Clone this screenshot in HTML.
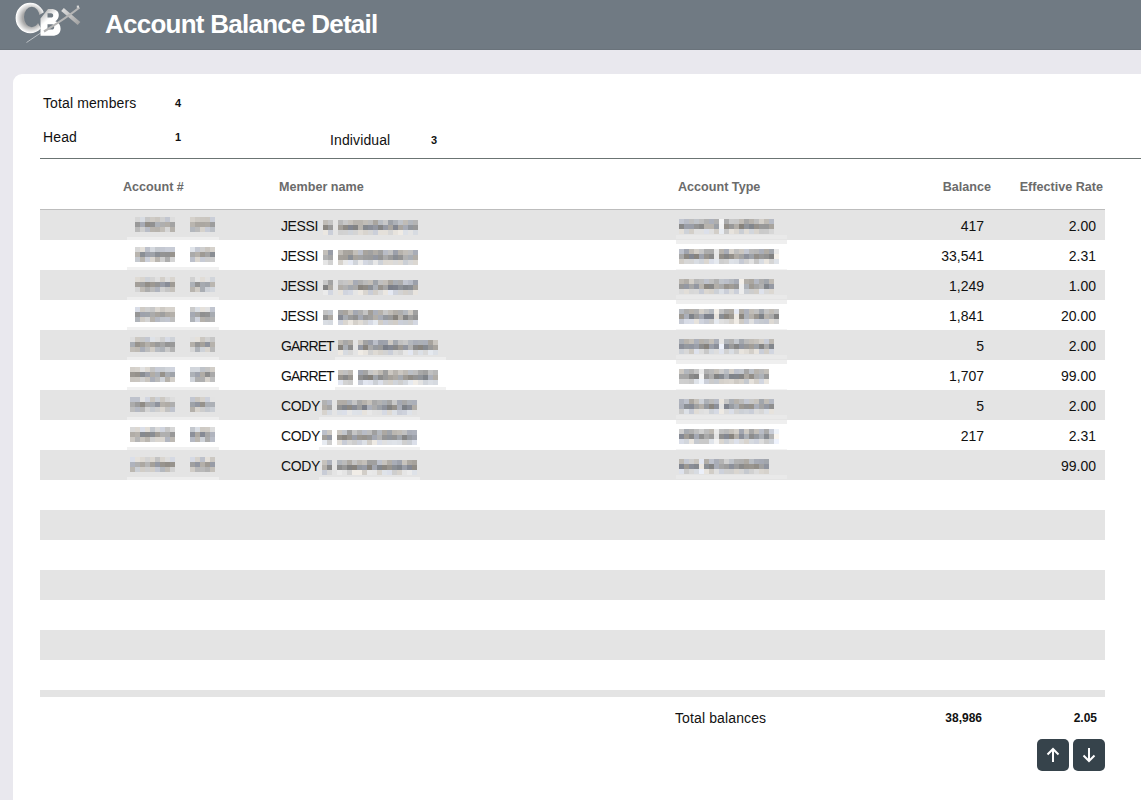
<!DOCTYPE html>
<html><head><meta charset="utf-8">
<style>
html,body{margin:0;padding:0}
body{width:1141px;height:800px;overflow:hidden;position:relative;background:#e9e8ee;font-family:"Liberation Sans",sans-serif;color:#111}
.hdr{position:absolute;left:0;top:0;width:1141px;height:49px;background:#707a83;border-bottom:1px solid #6a737b}
.title{position:absolute;left:105px;top:7px;font-size:26px;line-height:34px;font-weight:bold;color:#fff;letter-spacing:-0.75px;white-space:nowrap}
.card{position:absolute;left:13px;top:74px;width:1200px;height:900px;background:#fff;border-radius:9px}
.t{position:absolute;white-space:nowrap}
.lbl{font-size:14px;line-height:16px;letter-spacing:0.12px}
.val{font-size:11px;line-height:14px;font-weight:bold}
.hline{position:absolute;left:40px;top:158px;width:1101px;height:1px;background:#6b7473}
.th{position:absolute;top:179px;font-size:12.6px;line-height:16px;font-weight:bold;color:#6b6b6b;white-space:nowrap}
.row{position:absolute;left:40px;width:1065px;height:30px}
.row.g{background:#e4e4e4}
.row.w{background:#fff}
.topb{position:absolute;left:40px;top:209px;width:1065px;height:1px;background:#bdbdbd}
.cell{font-size:14px;line-height:30px;height:30px;margin-top:1px}
.nm{letter-spacing:-0.4px}
.r{text-align:right}
.btn{position:absolute;top:739px;width:32px;height:32px;border-radius:5px;background:#36434b}
</style></head><body>
<div class="hdr">
<svg width="100" height="50" style="position:absolute;left:0;top:0" viewBox="0 0 100 50">
<defs>
<radialGradient id="gc" cx="31" cy="18" r="15" gradientUnits="userSpaceOnUse"><stop offset="0.55" stop-color="#a5a5a5"/><stop offset="0.8" stop-color="#d8d8d8"/><stop offset="1" stop-color="#ffffff"/></radialGradient>
<linearGradient id="gb" x1="41" y1="12" x2="48" y2="20" gradientUnits="userSpaceOnUse"><stop offset="0" stop-color="#b0b0b0"/><stop offset="1" stop-color="#ffffff"/></linearGradient>
<linearGradient id="gx" x1="62" y1="8" x2="80" y2="24" gradientUnits="userSpaceOnUse"><stop offset="0" stop-color="#e0e0e0"/><stop offset="1" stop-color="#a0a0a0"/></linearGradient>
<clipPath id="cc"><path d="M0 0 H47 V10.5 L35 17.5 L50 45 H0 Z"/></clipPath>
</defs>
<path clip-path="url(#cc)" fill-rule="evenodd" fill="url(#gc)" d="M15.6 18 A14.6 15.2 0 1 0 44.8 18 A14.6 15.2 0 1 0 15.6 18 Z M24 17 A7.8 10.2 0 1 0 39.6 17 A7.8 10.2 0 1 0 24 17 Z"/>
<path d="M26.5 42.5 L45 30" stroke="#cdd1d4" stroke-width="0.8" fill="none"/>
<path fill-rule="evenodd" fill="url(#gb)" d="M48 9 H51 C56 9 58.8 11.5 58.8 15 C58.8 18 57.3 20 55.3 21.2 C58.8 22.3 60.6 25 60.6 28.7 C60.6 33 57.3 35.8 52.3 35.8 H40.5 L40.5 18.5 Z M47.5 13.3 H51 C52.6 13.3 53.2 14.4 53.2 15.4 C53.2 16.7 52.4 17.6 51 17.6 H47.5 Z M47.5 24.3 H52 C53.6 24.3 54.2 25.6 54.2 26.9 C54.2 28.5 53.4 29.6 52 29.6 H47.5 Z"/>
<path d="M62.5 9.5 L79 23.5" stroke="url(#gx)" stroke-width="4" fill="none"/>
<path d="M44 31.5 C58 23 70 15 79.5 7.5" stroke="#b5b5b5" stroke-width="2.2" fill="none"/>
<rect x="76.8" y="5.6" width="2.2" height="2.2" fill="#d8d8d8"/>
</svg>
<div class="title">Account Balance Detail</div>
</div>
<div class="card"></div>
<div class="t lbl" style="left:43px;top:95px">Total members</div>
<div class="t val" style="left:175px;top:96px">4</div>
<div class="t lbl" style="left:43px;top:129px">Head</div>
<div class="t val" style="left:175px;top:130px">1</div>
<div class="t lbl" style="left:330px;top:132px">Individual</div>
<div class="t val" style="left:431px;top:133px">3</div>
<div class="hline"></div>
<div class="th" style="left:123px">Account #</div>
<div class="th" style="left:279px">Member name</div>
<div class="th" style="left:678px">Account Type</div>
<div class="th" style="right:150px">Balance</div>
<div class="th" style="right:38px">Effective Rate</div>
<div class="row g" style="top:210px"></div><div class="row w" style="top:240px"></div><div class="row g" style="top:270px"></div><div class="row w" style="top:300px"></div><div class="row g" style="top:330px"></div><div class="row w" style="top:360px"></div><div class="row g" style="top:390px"></div><div class="row w" style="top:420px"></div><div class="row g" style="top:450px"></div><div class="row g" style="top:510px;height:30px"></div><div class="row g" style="top:570px;height:30px"></div><div class="row g" style="top:630px;height:30px"></div><div class="row g" style="top:690px;height:7px"></div>
<div class="topb"></div>
<svg width="1141" height="800" style="position:absolute;left:0;top:0" shape-rendering="crispEdges"><rect x="127" y="237" width="92" height="3" fill="#eeeeee"/><rect x="676" y="235" width="111" height="4" fill="#e9e9e9"/><rect x="676" y="240" width="111" height="4" fill="#efefef"/><rect x="135" y="217" width="5" height="5" fill="#d7d7d7"/><rect x="140" y="217" width="5" height="5" fill="#d8dce2"/><rect x="145" y="217" width="5" height="5" fill="#c6c6c6"/><rect x="150" y="217" width="5" height="5" fill="#cfcbc5"/><rect x="155" y="217" width="5" height="5" fill="#cac6c0"/><rect x="160" y="217" width="5" height="5" fill="#d0d0d0"/><rect x="165" y="217" width="5" height="5" fill="#c2c6d0"/><rect x="170" y="217" width="5" height="5" fill="#dddddd"/><rect x="135" y="222" width="5" height="5" fill="#999999"/><rect x="140" y="222" width="5" height="5" fill="#a7abb5"/><rect x="145" y="222" width="5" height="5" fill="#918d87"/><rect x="150" y="222" width="5" height="5" fill="#919191"/><rect x="155" y="222" width="5" height="5" fill="#aeb2b8"/><rect x="160" y="222" width="5" height="5" fill="#afafaf"/><rect x="165" y="222" width="5" height="5" fill="#b2aea8"/><rect x="170" y="222" width="5" height="5" fill="#a3a3a3"/><rect x="135" y="227" width="5" height="5" fill="#bababa"/><rect x="140" y="227" width="5" height="5" fill="#cfcfcf"/><rect x="145" y="227" width="5" height="5" fill="#b8bcc6"/><rect x="150" y="227" width="5" height="5" fill="#b9b5af"/><rect x="155" y="227" width="5" height="5" fill="#b7b3ad"/><rect x="160" y="227" width="5" height="5" fill="#c3bfb9"/><rect x="165" y="227" width="5" height="5" fill="#d7d7d7"/><rect x="170" y="227" width="5" height="5" fill="#b6b2ac"/><rect x="190" y="217" width="5" height="5" fill="#d5d1cb"/><rect x="195" y="217" width="5" height="5" fill="#cdc9c3"/><rect x="200" y="217" width="5" height="5" fill="#cbc7c1"/><rect x="205" y="217" width="5" height="5" fill="#cac6c0"/><rect x="210" y="217" width="5" height="5" fill="#caced8"/><rect x="190" y="222" width="5" height="5" fill="#b9b5af"/><rect x="195" y="222" width="5" height="5" fill="#aba7a1"/><rect x="200" y="222" width="5" height="5" fill="#aba7a1"/><rect x="205" y="222" width="5" height="5" fill="#ada9a3"/><rect x="210" y="222" width="5" height="5" fill="#9d9d9d"/><rect x="190" y="227" width="5" height="5" fill="#b3b7bd"/><rect x="195" y="227" width="5" height="5" fill="#bbbbbb"/><rect x="200" y="227" width="5" height="5" fill="#d6d2cc"/><rect x="205" y="227" width="5" height="5" fill="#c7cbd5"/><rect x="210" y="227" width="5" height="5" fill="#bdc1c7"/><rect x="323" y="220" width="5" height="5" fill="#c0bcb6"/><rect x="328" y="220" width="5" height="5" fill="#c4c4c4"/><rect x="323" y="225" width="5" height="5" fill="#8b8781"/><rect x="328" y="225" width="5" height="5" fill="#9a9a9a"/><rect x="323" y="230" width="5" height="5" fill="#ebe7e1"/><rect x="328" y="230" width="5" height="5" fill="#cbcfd9"/><rect x="338" y="220" width="5" height="5" fill="#b8b8b8"/><rect x="343" y="220" width="5" height="5" fill="#c8c8c8"/><rect x="348" y="220" width="5" height="5" fill="#c5c1bb"/><rect x="353" y="220" width="5" height="5" fill="#b8b4ae"/><rect x="358" y="220" width="5" height="5" fill="#b8b4ae"/><rect x="363" y="220" width="5" height="5" fill="#c1bdb7"/><rect x="368" y="220" width="5" height="5" fill="#bbbbbb"/><rect x="373" y="220" width="5" height="5" fill="#a9a59f"/><rect x="378" y="220" width="5" height="5" fill="#b8bcc2"/><rect x="383" y="220" width="5" height="5" fill="#c8c8c8"/><rect x="388" y="220" width="5" height="5" fill="#9da1a7"/><rect x="393" y="220" width="5" height="5" fill="#adb1b7"/><rect x="398" y="220" width="5" height="5" fill="#bec2c8"/><rect x="403" y="220" width="5" height="5" fill="#c0bcb6"/><rect x="408" y="220" width="5" height="5" fill="#b2b6bc"/><rect x="413" y="220" width="5" height="5" fill="#b4b4b4"/><rect x="338" y="225" width="5" height="5" fill="#a39f99"/><rect x="343" y="225" width="5" height="5" fill="#8e8a84"/><rect x="348" y="225" width="5" height="5" fill="#81858f"/><rect x="353" y="225" width="5" height="5" fill="#838383"/><rect x="358" y="225" width="5" height="5" fill="#b7b3ad"/><rect x="363" y="225" width="5" height="5" fill="#84888e"/><rect x="368" y="225" width="5" height="5" fill="#898d97"/><rect x="373" y="225" width="5" height="5" fill="#9397a1"/><rect x="378" y="225" width="5" height="5" fill="#858585"/><rect x="383" y="225" width="5" height="5" fill="#969aa4"/><rect x="388" y="225" width="5" height="5" fill="#a9a59f"/><rect x="393" y="225" width="5" height="5" fill="#828690"/><rect x="398" y="225" width="5" height="5" fill="#a9a59f"/><rect x="403" y="225" width="5" height="5" fill="#a7abb5"/><rect x="408" y="225" width="5" height="5" fill="#92969c"/><rect x="413" y="225" width="5" height="5" fill="#989898"/><rect x="338" y="230" width="5" height="5" fill="#d1d1d1"/><rect x="343" y="230" width="5" height="5" fill="#d2d2d2"/><rect x="348" y="230" width="5" height="5" fill="#d0d4da"/><rect x="353" y="230" width="5" height="5" fill="#d4d4d4"/><rect x="358" y="230" width="5" height="5" fill="#e0dcd6"/><rect x="363" y="230" width="5" height="5" fill="#d8d4ce"/><rect x="368" y="230" width="5" height="5" fill="#d6d6d6"/><rect x="373" y="230" width="5" height="5" fill="#cbcfd9"/><rect x="378" y="230" width="5" height="5" fill="#e4e0da"/><rect x="383" y="230" width="5" height="5" fill="#e4e0da"/><rect x="388" y="230" width="5" height="5" fill="#d7d7d7"/><rect x="393" y="230" width="5" height="5" fill="#e7e3dd"/><rect x="398" y="230" width="5" height="5" fill="#efebe5"/><rect x="403" y="230" width="5" height="5" fill="#dde1e7"/><rect x="408" y="230" width="5" height="5" fill="#e4e4e4"/><rect x="413" y="230" width="5" height="5" fill="#d7dbe1"/><rect x="679" y="219" width="5" height="5" fill="#c2c6d0"/><rect x="684" y="219" width="5" height="5" fill="#b8bcc6"/><rect x="689" y="219" width="5" height="5" fill="#bebebe"/><rect x="694" y="219" width="5" height="5" fill="#bfc3c9"/><rect x="699" y="219" width="5" height="5" fill="#bebebe"/><rect x="704" y="219" width="5" height="5" fill="#b1b1b1"/><rect x="709" y="219" width="5" height="5" fill="#acb0ba"/><rect x="714" y="219" width="5" height="5" fill="#afafaf"/><rect x="719" y="219" width="5" height="5" fill="#f4f4f4"/><rect x="724" y="219" width="5" height="5" fill="#ababab"/><rect x="729" y="219" width="5" height="5" fill="#c9c9c9"/><rect x="734" y="219" width="5" height="5" fill="#c7c7c7"/><rect x="739" y="219" width="5" height="5" fill="#c0bcb6"/><rect x="744" y="219" width="5" height="5" fill="#a6a6a6"/><rect x="749" y="219" width="5" height="5" fill="#b6b2ac"/><rect x="754" y="219" width="5" height="5" fill="#bdbdbd"/><rect x="759" y="219" width="5" height="5" fill="#d3cfc9"/><rect x="764" y="219" width="5" height="5" fill="#bfbbb5"/><rect x="769" y="219" width="5" height="5" fill="#b6bac4"/><rect x="679" y="224" width="5" height="5" fill="#898989"/><rect x="684" y="224" width="5" height="5" fill="#9b9fa9"/><rect x="689" y="224" width="5" height="5" fill="#9a9ea8"/><rect x="694" y="224" width="5" height="5" fill="#959595"/><rect x="699" y="224" width="5" height="5" fill="#8b8b8b"/><rect x="704" y="224" width="5" height="5" fill="#b7b3ad"/><rect x="709" y="224" width="5" height="5" fill="#b7b3ad"/><rect x="714" y="224" width="5" height="5" fill="#9ca0a6"/><rect x="719" y="224" width="5" height="5" fill="#f1f1f1"/><rect x="724" y="224" width="5" height="5" fill="#938f89"/><rect x="729" y="224" width="5" height="5" fill="#999999"/><rect x="734" y="224" width="5" height="5" fill="#b2aea8"/><rect x="739" y="224" width="5" height="5" fill="#87837d"/><rect x="744" y="224" width="5" height="5" fill="#91959b"/><rect x="749" y="224" width="5" height="5" fill="#83878d"/><rect x="754" y="224" width="5" height="5" fill="#96928c"/><rect x="759" y="224" width="5" height="5" fill="#999999"/><rect x="764" y="224" width="5" height="5" fill="#989898"/><rect x="769" y="224" width="5" height="5" fill="#a8a49e"/><rect x="679" y="229" width="5" height="5" fill="#e4e0da"/><rect x="684" y="229" width="5" height="5" fill="#ced2d8"/><rect x="689" y="229" width="5" height="5" fill="#d3cfc9"/><rect x="694" y="229" width="5" height="5" fill="#e1e1e1"/><rect x="699" y="229" width="5" height="5" fill="#e1e1e1"/><rect x="704" y="229" width="5" height="5" fill="#dce0ea"/><rect x="709" y="229" width="5" height="5" fill="#dfdfdf"/><rect x="714" y="229" width="5" height="5" fill="#d2cec8"/><rect x="719" y="229" width="5" height="5" fill="#e8ecf2"/><rect x="724" y="229" width="5" height="5" fill="#c8c8c8"/><rect x="729" y="229" width="5" height="5" fill="#e7e3dd"/><rect x="734" y="229" width="5" height="5" fill="#ddd9d3"/><rect x="739" y="229" width="5" height="5" fill="#caced4"/><rect x="744" y="229" width="5" height="5" fill="#e1ddd7"/><rect x="749" y="229" width="5" height="5" fill="#d2d6dc"/><rect x="754" y="229" width="5" height="5" fill="#d9d5cf"/><rect x="759" y="229" width="5" height="5" fill="#cacaca"/><rect x="764" y="229" width="5" height="5" fill="#cbcbcb"/><rect x="769" y="229" width="5" height="5" fill="#d7d7d7"/><rect x="127" y="267" width="92" height="3" fill="#f1f1f1"/><rect x="676" y="269" width="111" height="1" fill="#f4f4f4"/><rect x="135" y="247" width="5" height="5" fill="#d8d8d8"/><rect x="140" y="247" width="5" height="5" fill="#e5e1db"/><rect x="145" y="247" width="5" height="5" fill="#bdc1cb"/><rect x="150" y="247" width="5" height="5" fill="#d5d9df"/><rect x="155" y="247" width="5" height="5" fill="#c4c8ce"/><rect x="160" y="247" width="5" height="5" fill="#c4c8d2"/><rect x="165" y="247" width="5" height="5" fill="#c9cdd7"/><rect x="170" y="247" width="5" height="5" fill="#c8ccd6"/><rect x="135" y="252" width="5" height="5" fill="#b8b4ae"/><rect x="140" y="252" width="5" height="5" fill="#8b8f95"/><rect x="145" y="252" width="5" height="5" fill="#9da1ab"/><rect x="150" y="252" width="5" height="5" fill="#9fa3a9"/><rect x="155" y="252" width="5" height="5" fill="#8b8f95"/><rect x="160" y="252" width="5" height="5" fill="#949494"/><rect x="165" y="252" width="5" height="5" fill="#929292"/><rect x="170" y="252" width="5" height="5" fill="#97938d"/><rect x="135" y="257" width="5" height="5" fill="#c5c9cf"/><rect x="140" y="257" width="5" height="5" fill="#b9b5af"/><rect x="145" y="257" width="5" height="5" fill="#ccd0da"/><rect x="150" y="257" width="5" height="5" fill="#dcd8d2"/><rect x="155" y="257" width="5" height="5" fill="#b9b5af"/><rect x="160" y="257" width="5" height="5" fill="#cfcfcf"/><rect x="165" y="257" width="5" height="5" fill="#adadad"/><rect x="170" y="257" width="5" height="5" fill="#d5d5d5"/><rect x="190" y="247" width="5" height="5" fill="#e0e4ea"/><rect x="195" y="247" width="5" height="5" fill="#c5c9d3"/><rect x="200" y="247" width="5" height="5" fill="#cfcfcf"/><rect x="205" y="247" width="5" height="5" fill="#cac6c0"/><rect x="210" y="247" width="5" height="5" fill="#d6d2cc"/><rect x="190" y="252" width="5" height="5" fill="#aaaaaa"/><rect x="195" y="252" width="5" height="5" fill="#b5b1ab"/><rect x="200" y="252" width="5" height="5" fill="#9e9a94"/><rect x="205" y="252" width="5" height="5" fill="#a4a4a4"/><rect x="210" y="252" width="5" height="5" fill="#898d93"/><rect x="190" y="257" width="5" height="5" fill="#bcc0ca"/><rect x="195" y="257" width="5" height="5" fill="#dad6d0"/><rect x="200" y="257" width="5" height="5" fill="#c7cbd5"/><rect x="205" y="257" width="5" height="5" fill="#cccccc"/><rect x="210" y="257" width="5" height="5" fill="#cecece"/><rect x="323" y="250" width="5" height="5" fill="#c3bfb9"/><rect x="328" y="250" width="5" height="5" fill="#999da7"/><rect x="323" y="255" width="5" height="5" fill="#b1b1b1"/><rect x="328" y="255" width="5" height="5" fill="#a6a6a6"/><rect x="323" y="260" width="5" height="5" fill="#e5e5e5"/><rect x="328" y="260" width="5" height="5" fill="#d2d2d2"/><rect x="338" y="250" width="5" height="5" fill="#c0bcb6"/><rect x="343" y="250" width="5" height="5" fill="#a9a59f"/><rect x="348" y="250" width="5" height="5" fill="#a7a39d"/><rect x="353" y="250" width="5" height="5" fill="#c3bfb9"/><rect x="358" y="250" width="5" height="5" fill="#bbbfc9"/><rect x="363" y="250" width="5" height="5" fill="#a8a49e"/><rect x="368" y="250" width="5" height="5" fill="#a1a1a1"/><rect x="373" y="250" width="5" height="5" fill="#b0aca6"/><rect x="378" y="250" width="5" height="5" fill="#a0a0a0"/><rect x="383" y="250" width="5" height="5" fill="#b8bcc6"/><rect x="388" y="250" width="5" height="5" fill="#c1c1c1"/><rect x="393" y="250" width="5" height="5" fill="#9ca0aa"/><rect x="398" y="250" width="5" height="5" fill="#b6b2ac"/><rect x="403" y="250" width="5" height="5" fill="#c2beb8"/><rect x="408" y="250" width="5" height="5" fill="#bebebe"/><rect x="413" y="250" width="5" height="5" fill="#a9adb7"/><rect x="338" y="255" width="5" height="5" fill="#a4a09a"/><rect x="343" y="255" width="5" height="5" fill="#a29e98"/><rect x="348" y="255" width="5" height="5" fill="#8b8f95"/><rect x="353" y="255" width="5" height="5" fill="#a7a39d"/><rect x="358" y="255" width="5" height="5" fill="#a3a3a3"/><rect x="363" y="255" width="5" height="5" fill="#9c9c9c"/><rect x="368" y="255" width="5" height="5" fill="#9a9a9a"/><rect x="373" y="255" width="5" height="5" fill="#9397a1"/><rect x="378" y="255" width="5" height="5" fill="#949494"/><rect x="383" y="255" width="5" height="5" fill="#aaaaaa"/><rect x="388" y="255" width="5" height="5" fill="#9b9b9b"/><rect x="393" y="255" width="5" height="5" fill="#898d93"/><rect x="398" y="255" width="5" height="5" fill="#939393"/><rect x="403" y="255" width="5" height="5" fill="#b1b1b1"/><rect x="408" y="255" width="5" height="5" fill="#a9adb3"/><rect x="413" y="255" width="5" height="5" fill="#b0aca6"/><rect x="338" y="260" width="5" height="5" fill="#d7d3cd"/><rect x="343" y="260" width="5" height="5" fill="#e9e9e9"/><rect x="348" y="260" width="5" height="5" fill="#e5e9f3"/><rect x="353" y="260" width="5" height="5" fill="#d0d4da"/><rect x="358" y="260" width="5" height="5" fill="#ebebeb"/><rect x="363" y="260" width="5" height="5" fill="#d3d7e1"/><rect x="368" y="260" width="5" height="5" fill="#ced2d8"/><rect x="373" y="260" width="5" height="5" fill="#e7e7e7"/><rect x="378" y="260" width="5" height="5" fill="#ced2d8"/><rect x="383" y="260" width="5" height="5" fill="#dedad4"/><rect x="388" y="260" width="5" height="5" fill="#dfdbd5"/><rect x="393" y="260" width="5" height="5" fill="#dadada"/><rect x="398" y="260" width="5" height="5" fill="#dedad4"/><rect x="403" y="260" width="5" height="5" fill="#cbcfd5"/><rect x="408" y="260" width="5" height="5" fill="#d8d8d8"/><rect x="413" y="260" width="5" height="5" fill="#dbd7d1"/><rect x="679" y="249" width="5" height="5" fill="#bcc0ca"/><rect x="684" y="249" width="5" height="5" fill="#a0a4ae"/><rect x="689" y="249" width="5" height="5" fill="#bebab4"/><rect x="694" y="249" width="5" height="5" fill="#d2cec8"/><rect x="699" y="249" width="5" height="5" fill="#c5c5c5"/><rect x="704" y="249" width="5" height="5" fill="#acacac"/><rect x="709" y="249" width="5" height="5" fill="#ababab"/><rect x="714" y="249" width="5" height="5" fill="#e9e9e9"/><rect x="719" y="249" width="5" height="5" fill="#b6b2ac"/><rect x="724" y="249" width="5" height="5" fill="#a7abb5"/><rect x="729" y="249" width="5" height="5" fill="#d6d2cc"/><rect x="734" y="249" width="5" height="5" fill="#bebebe"/><rect x="739" y="249" width="5" height="5" fill="#cbc7c1"/><rect x="744" y="249" width="5" height="5" fill="#c3c7d1"/><rect x="749" y="249" width="5" height="5" fill="#b9b9b9"/><rect x="754" y="249" width="5" height="5" fill="#b6b6b6"/><rect x="759" y="249" width="5" height="5" fill="#aaaeb8"/><rect x="764" y="249" width="5" height="5" fill="#afaba5"/><rect x="769" y="249" width="5" height="5" fill="#a2a6ac"/><rect x="774" y="249" width="5" height="5" fill="#e9e9e9"/><rect x="679" y="254" width="5" height="5" fill="#a8a8a8"/><rect x="684" y="254" width="5" height="5" fill="#8c8882"/><rect x="689" y="254" width="5" height="5" fill="#838791"/><rect x="694" y="254" width="5" height="5" fill="#88847e"/><rect x="699" y="254" width="5" height="5" fill="#9fa3ad"/><rect x="704" y="254" width="5" height="5" fill="#97938d"/><rect x="709" y="254" width="5" height="5" fill="#8a8a8a"/><rect x="714" y="254" width="5" height="5" fill="#e8e8e8"/><rect x="719" y="254" width="5" height="5" fill="#928e88"/><rect x="724" y="254" width="5" height="5" fill="#858585"/><rect x="729" y="254" width="5" height="5" fill="#94908a"/><rect x="734" y="254" width="5" height="5" fill="#b0aca6"/><rect x="739" y="254" width="5" height="5" fill="#a3a3a3"/><rect x="744" y="254" width="5" height="5" fill="#8e929c"/><rect x="749" y="254" width="5" height="5" fill="#9ea2a8"/><rect x="754" y="254" width="5" height="5" fill="#938f89"/><rect x="759" y="254" width="5" height="5" fill="#989898"/><rect x="764" y="254" width="5" height="5" fill="#929292"/><rect x="769" y="254" width="5" height="5" fill="#828282"/><rect x="774" y="254" width="5" height="5" fill="#f5f1eb"/><rect x="679" y="259" width="5" height="5" fill="#d2cec8"/><rect x="684" y="259" width="5" height="5" fill="#d7d7d7"/><rect x="689" y="259" width="5" height="5" fill="#d6d6d6"/><rect x="694" y="259" width="5" height="5" fill="#d9dde3"/><rect x="699" y="259" width="5" height="5" fill="#d1d5db"/><rect x="704" y="259" width="5" height="5" fill="#dbd7d1"/><rect x="709" y="259" width="5" height="5" fill="#dce0ea"/><rect x="714" y="259" width="5" height="5" fill="#e6eaf0"/><rect x="719" y="259" width="5" height="5" fill="#cecece"/><rect x="724" y="259" width="5" height="5" fill="#d2d2d2"/><rect x="729" y="259" width="5" height="5" fill="#dee2e8"/><rect x="734" y="259" width="5" height="5" fill="#dbdfe5"/><rect x="739" y="259" width="5" height="5" fill="#c6cad4"/><rect x="744" y="259" width="5" height="5" fill="#d3d3d3"/><rect x="749" y="259" width="5" height="5" fill="#e2e2e2"/><rect x="754" y="259" width="5" height="5" fill="#c8c8c8"/><rect x="759" y="259" width="5" height="5" fill="#d8dce2"/><rect x="764" y="259" width="5" height="5" fill="#eae6e0"/><rect x="769" y="259" width="5" height="5" fill="#d5d5d5"/><rect x="774" y="259" width="5" height="5" fill="#dfe3e9"/><rect x="127" y="297" width="92" height="3" fill="#eeeeee"/><rect x="676" y="295" width="111" height="4" fill="#e9e9e9"/><rect x="676" y="300" width="111" height="4" fill="#efefef"/><rect x="135" y="277" width="5" height="5" fill="#dfdbd5"/><rect x="140" y="277" width="5" height="5" fill="#d9d5cf"/><rect x="145" y="277" width="5" height="5" fill="#ced2d8"/><rect x="150" y="277" width="5" height="5" fill="#d5d5d5"/><rect x="155" y="277" width="5" height="5" fill="#e0e0e0"/><rect x="160" y="277" width="5" height="5" fill="#d3cfc9"/><rect x="165" y="277" width="5" height="5" fill="#dfdfdf"/><rect x="170" y="277" width="5" height="5" fill="#d9d5cf"/><rect x="135" y="282" width="5" height="5" fill="#a39f99"/><rect x="140" y="282" width="5" height="5" fill="#9e9e9e"/><rect x="145" y="282" width="5" height="5" fill="#928e88"/><rect x="150" y="282" width="5" height="5" fill="#9d9993"/><rect x="155" y="282" width="5" height="5" fill="#959595"/><rect x="160" y="282" width="5" height="5" fill="#999da7"/><rect x="165" y="282" width="5" height="5" fill="#898d97"/><rect x="170" y="282" width="5" height="5" fill="#9f9b95"/><rect x="135" y="287" width="5" height="5" fill="#d5d5d5"/><rect x="140" y="287" width="5" height="5" fill="#bfbbb5"/><rect x="145" y="287" width="5" height="5" fill="#acacac"/><rect x="150" y="287" width="5" height="5" fill="#bcbcbc"/><rect x="155" y="287" width="5" height="5" fill="#afb3bd"/><rect x="160" y="287" width="5" height="5" fill="#d1d1d1"/><rect x="165" y="287" width="5" height="5" fill="#c5c5c5"/><rect x="170" y="287" width="5" height="5" fill="#c5c1bb"/><rect x="190" y="277" width="5" height="5" fill="#d1d1d1"/><rect x="195" y="277" width="5" height="5" fill="#e4e4e4"/><rect x="200" y="277" width="5" height="5" fill="#e1ddd7"/><rect x="205" y="277" width="5" height="5" fill="#e2e2e2"/><rect x="210" y="277" width="5" height="5" fill="#d1d5db"/><rect x="190" y="282" width="5" height="5" fill="#adb1b7"/><rect x="195" y="282" width="5" height="5" fill="#939393"/><rect x="200" y="282" width="5" height="5" fill="#a6aab0"/><rect x="205" y="282" width="5" height="5" fill="#a1a5ab"/><rect x="210" y="282" width="5" height="5" fill="#bab6b0"/><rect x="190" y="287" width="5" height="5" fill="#b8b4ae"/><rect x="195" y="287" width="5" height="5" fill="#d0ccc6"/><rect x="200" y="287" width="5" height="5" fill="#a9adb3"/><rect x="205" y="287" width="5" height="5" fill="#cdd1d7"/><rect x="210" y="287" width="5" height="5" fill="#d3d7dd"/><rect x="323" y="280" width="5" height="5" fill="#c7c7c7"/><rect x="328" y="280" width="5" height="5" fill="#a3a3a3"/><rect x="323" y="285" width="5" height="5" fill="#828282"/><rect x="328" y="285" width="5" height="5" fill="#aeaaa4"/><rect x="323" y="290" width="5" height="5" fill="#ebebeb"/><rect x="328" y="290" width="5" height="5" fill="#d3d7e1"/><rect x="338" y="280" width="5" height="5" fill="#c1c1c1"/><rect x="343" y="280" width="5" height="5" fill="#c6c6c6"/><rect x="348" y="280" width="5" height="5" fill="#cac6c0"/><rect x="353" y="280" width="5" height="5" fill="#a7abb5"/><rect x="358" y="280" width="5" height="5" fill="#aeaeae"/><rect x="363" y="280" width="5" height="5" fill="#bbbbbb"/><rect x="368" y="280" width="5" height="5" fill="#c2beb8"/><rect x="373" y="280" width="5" height="5" fill="#9fa3a9"/><rect x="378" y="280" width="5" height="5" fill="#bfbfbf"/><rect x="383" y="280" width="5" height="5" fill="#c2beb8"/><rect x="388" y="280" width="5" height="5" fill="#a8a49e"/><rect x="393" y="280" width="5" height="5" fill="#a9adb3"/><rect x="398" y="280" width="5" height="5" fill="#ababab"/><rect x="403" y="280" width="5" height="5" fill="#c1c5cf"/><rect x="408" y="280" width="5" height="5" fill="#b7bbc5"/><rect x="413" y="280" width="5" height="5" fill="#9ca0aa"/><rect x="338" y="285" width="5" height="5" fill="#b1ada7"/><rect x="343" y="285" width="5" height="5" fill="#b1b1b1"/><rect x="348" y="285" width="5" height="5" fill="#a3a7ad"/><rect x="353" y="285" width="5" height="5" fill="#a9a9a9"/><rect x="358" y="285" width="5" height="5" fill="#88847e"/><rect x="363" y="285" width="5" height="5" fill="#8f8b85"/><rect x="368" y="285" width="5" height="5" fill="#8c9096"/><rect x="373" y="285" width="5" height="5" fill="#abafb5"/><rect x="378" y="285" width="5" height="5" fill="#97938d"/><rect x="383" y="285" width="5" height="5" fill="#a4a4a4"/><rect x="388" y="285" width="5" height="5" fill="#7a7e88"/><rect x="393" y="285" width="5" height="5" fill="#7d818b"/><rect x="398" y="285" width="5" height="5" fill="#8d9197"/><rect x="403" y="285" width="5" height="5" fill="#82868c"/><rect x="408" y="285" width="5" height="5" fill="#898d93"/><rect x="413" y="285" width="5" height="5" fill="#a5a19b"/><rect x="338" y="290" width="5" height="5" fill="#e7e3dd"/><rect x="343" y="290" width="5" height="5" fill="#d0d4de"/><rect x="348" y="290" width="5" height="5" fill="#d5d9e3"/><rect x="353" y="290" width="5" height="5" fill="#e5e5e5"/><rect x="358" y="290" width="5" height="5" fill="#ede9e3"/><rect x="363" y="290" width="5" height="5" fill="#d9d5cf"/><rect x="368" y="290" width="5" height="5" fill="#c9cdd7"/><rect x="373" y="290" width="5" height="5" fill="#d3cfc9"/><rect x="378" y="290" width="5" height="5" fill="#dbdbdb"/><rect x="383" y="290" width="5" height="5" fill="#ebe7e1"/><rect x="388" y="290" width="5" height="5" fill="#e5e9f3"/><rect x="393" y="290" width="5" height="5" fill="#cfd3dd"/><rect x="398" y="290" width="5" height="5" fill="#d3d3d3"/><rect x="403" y="290" width="5" height="5" fill="#d3cfc9"/><rect x="408" y="290" width="5" height="5" fill="#cfcfcf"/><rect x="413" y="290" width="5" height="5" fill="#e8e4de"/><rect x="679" y="279" width="5" height="5" fill="#bbb7b1"/><rect x="684" y="279" width="5" height="5" fill="#b1ada7"/><rect x="689" y="279" width="5" height="5" fill="#d1cdc7"/><rect x="694" y="279" width="5" height="5" fill="#b6b6b6"/><rect x="699" y="279" width="5" height="5" fill="#bcbcbc"/><rect x="704" y="279" width="5" height="5" fill="#bec2cc"/><rect x="709" y="279" width="5" height="5" fill="#bebebe"/><rect x="714" y="279" width="5" height="5" fill="#afafaf"/><rect x="719" y="279" width="5" height="5" fill="#c0c4ca"/><rect x="724" y="279" width="5" height="5" fill="#bbbfc9"/><rect x="729" y="279" width="5" height="5" fill="#b4b8be"/><rect x="734" y="279" width="5" height="5" fill="#a8acb6"/><rect x="739" y="279" width="5" height="5" fill="#f3efe9"/><rect x="744" y="279" width="5" height="5" fill="#b2aea8"/><rect x="749" y="279" width="5" height="5" fill="#aba7a1"/><rect x="754" y="279" width="5" height="5" fill="#b4b8c2"/><rect x="759" y="279" width="5" height="5" fill="#acacac"/><rect x="764" y="279" width="5" height="5" fill="#a1a5ab"/><rect x="769" y="279" width="5" height="5" fill="#bdb9b3"/><rect x="679" y="284" width="5" height="5" fill="#999999"/><rect x="684" y="284" width="5" height="5" fill="#9599a3"/><rect x="689" y="284" width="5" height="5" fill="#a7a7a7"/><rect x="694" y="284" width="5" height="5" fill="#9397a1"/><rect x="699" y="284" width="5" height="5" fill="#b8b4ae"/><rect x="704" y="284" width="5" height="5" fill="#8b8781"/><rect x="709" y="284" width="5" height="5" fill="#888888"/><rect x="714" y="284" width="5" height="5" fill="#b2aea8"/><rect x="719" y="284" width="5" height="5" fill="#aaaaaa"/><rect x="724" y="284" width="5" height="5" fill="#97938d"/><rect x="729" y="284" width="5" height="5" fill="#a19d97"/><rect x="734" y="284" width="5" height="5" fill="#969696"/><rect x="739" y="284" width="5" height="5" fill="#eeeeee"/><rect x="744" y="284" width="5" height="5" fill="#aeb2b8"/><rect x="749" y="284" width="5" height="5" fill="#9f9b95"/><rect x="754" y="284" width="5" height="5" fill="#a5a5a5"/><rect x="759" y="284" width="5" height="5" fill="#b0b0b0"/><rect x="764" y="284" width="5" height="5" fill="#81858b"/><rect x="769" y="284" width="5" height="5" fill="#969aa4"/><rect x="679" y="289" width="5" height="5" fill="#dbdbdb"/><rect x="684" y="289" width="5" height="5" fill="#e2ded8"/><rect x="689" y="289" width="5" height="5" fill="#d7d7d7"/><rect x="694" y="289" width="5" height="5" fill="#d9d9d9"/><rect x="699" y="289" width="5" height="5" fill="#c7cbd5"/><rect x="704" y="289" width="5" height="5" fill="#dbd7d1"/><rect x="709" y="289" width="5" height="5" fill="#d7d3cd"/><rect x="714" y="289" width="5" height="5" fill="#ccd0d6"/><rect x="719" y="289" width="5" height="5" fill="#dbdfe5"/><rect x="724" y="289" width="5" height="5" fill="#caced8"/><rect x="729" y="289" width="5" height="5" fill="#dcdcdc"/><rect x="734" y="289" width="5" height="5" fill="#cbcfd9"/><rect x="739" y="289" width="5" height="5" fill="#ededed"/><rect x="744" y="289" width="5" height="5" fill="#c9cdd3"/><rect x="749" y="289" width="5" height="5" fill="#cdcdcd"/><rect x="754" y="289" width="5" height="5" fill="#d2cec8"/><rect x="759" y="289" width="5" height="5" fill="#dee2ec"/><rect x="764" y="289" width="5" height="5" fill="#d9d9d9"/><rect x="769" y="289" width="5" height="5" fill="#dcd8d2"/><rect x="127" y="327" width="92" height="3" fill="#f1f1f1"/><rect x="676" y="329" width="111" height="1" fill="#f4f4f4"/><rect x="135" y="307" width="5" height="5" fill="#d9dde7"/><rect x="140" y="307" width="5" height="5" fill="#cfcbc5"/><rect x="145" y="307" width="5" height="5" fill="#cfcfcf"/><rect x="150" y="307" width="5" height="5" fill="#c8c8c8"/><rect x="155" y="307" width="5" height="5" fill="#dcd8d2"/><rect x="160" y="307" width="5" height="5" fill="#cecac4"/><rect x="165" y="307" width="5" height="5" fill="#d8d4ce"/><rect x="170" y="307" width="5" height="5" fill="#d7d3cd"/><rect x="135" y="312" width="5" height="5" fill="#969696"/><rect x="140" y="312" width="5" height="5" fill="#9ea2ac"/><rect x="145" y="312" width="5" height="5" fill="#a0a4aa"/><rect x="150" y="312" width="5" height="5" fill="#ababab"/><rect x="155" y="312" width="5" height="5" fill="#a8a49e"/><rect x="160" y="312" width="5" height="5" fill="#9f9f9f"/><rect x="165" y="312" width="5" height="5" fill="#afaba5"/><rect x="170" y="312" width="5" height="5" fill="#b4b0aa"/><rect x="135" y="317" width="5" height="5" fill="#b0b4ba"/><rect x="140" y="317" width="5" height="5" fill="#d0ccc6"/><rect x="145" y="317" width="5" height="5" fill="#d4d4d4"/><rect x="150" y="317" width="5" height="5" fill="#b7b3ad"/><rect x="155" y="317" width="5" height="5" fill="#b5b9c3"/><rect x="160" y="317" width="5" height="5" fill="#c1c5cb"/><rect x="165" y="317" width="5" height="5" fill="#c2c6d0"/><rect x="170" y="317" width="5" height="5" fill="#bfbfbf"/><rect x="190" y="307" width="5" height="5" fill="#cbcbcb"/><rect x="195" y="307" width="5" height="5" fill="#dadee4"/><rect x="200" y="307" width="5" height="5" fill="#e5e1db"/><rect x="205" y="307" width="5" height="5" fill="#e2e2e2"/><rect x="210" y="307" width="5" height="5" fill="#c1c5cf"/><rect x="190" y="312" width="5" height="5" fill="#a5a9b3"/><rect x="195" y="312" width="5" height="5" fill="#a6a6a6"/><rect x="200" y="312" width="5" height="5" fill="#909090"/><rect x="205" y="312" width="5" height="5" fill="#939393"/><rect x="210" y="312" width="5" height="5" fill="#a7abb1"/><rect x="190" y="317" width="5" height="5" fill="#aeb2b8"/><rect x="195" y="317" width="5" height="5" fill="#cfd3dd"/><rect x="200" y="317" width="5" height="5" fill="#b5b1ab"/><rect x="205" y="317" width="5" height="5" fill="#aeaeae"/><rect x="210" y="317" width="5" height="5" fill="#b4b4b4"/><rect x="323" y="310" width="5" height="5" fill="#c2c2c2"/><rect x="328" y="310" width="5" height="5" fill="#c3c7cd"/><rect x="323" y="315" width="5" height="5" fill="#939393"/><rect x="328" y="315" width="5" height="5" fill="#aeaaa4"/><rect x="323" y="320" width="5" height="5" fill="#d9dde3"/><rect x="328" y="320" width="5" height="5" fill="#d6dae0"/><rect x="338" y="310" width="5" height="5" fill="#a5a5a5"/><rect x="343" y="310" width="5" height="5" fill="#a8a49e"/><rect x="348" y="310" width="5" height="5" fill="#c3bfb9"/><rect x="353" y="310" width="5" height="5" fill="#a4a8b2"/><rect x="358" y="310" width="5" height="5" fill="#aeaeae"/><rect x="363" y="310" width="5" height="5" fill="#c4c4c4"/><rect x="368" y="310" width="5" height="5" fill="#a29e98"/><rect x="373" y="310" width="5" height="5" fill="#abafb9"/><rect x="378" y="310" width="5" height="5" fill="#b5b1ab"/><rect x="383" y="310" width="5" height="5" fill="#c7c7c7"/><rect x="388" y="310" width="5" height="5" fill="#c0bcb6"/><rect x="393" y="310" width="5" height="5" fill="#b1ada7"/><rect x="398" y="310" width="5" height="5" fill="#adadad"/><rect x="403" y="310" width="5" height="5" fill="#b4b8be"/><rect x="408" y="310" width="5" height="5" fill="#cdc9c3"/><rect x="413" y="310" width="5" height="5" fill="#a1a1a1"/><rect x="338" y="315" width="5" height="5" fill="#868a94"/><rect x="343" y="315" width="5" height="5" fill="#a7abb1"/><rect x="348" y="315" width="5" height="5" fill="#9a9a9a"/><rect x="353" y="315" width="5" height="5" fill="#909090"/><rect x="358" y="315" width="5" height="5" fill="#a4a8b2"/><rect x="363" y="315" width="5" height="5" fill="#979797"/><rect x="368" y="315" width="5" height="5" fill="#9f9f9f"/><rect x="373" y="315" width="5" height="5" fill="#b2aea8"/><rect x="378" y="315" width="5" height="5" fill="#a7abb5"/><rect x="383" y="315" width="5" height="5" fill="#93979d"/><rect x="388" y="315" width="5" height="5" fill="#999999"/><rect x="393" y="315" width="5" height="5" fill="#86827c"/><rect x="398" y="315" width="5" height="5" fill="#b3afa9"/><rect x="403" y="315" width="5" height="5" fill="#848484"/><rect x="408" y="315" width="5" height="5" fill="#9f9f9f"/><rect x="413" y="315" width="5" height="5" fill="#939393"/><rect x="338" y="320" width="5" height="5" fill="#ced2dc"/><rect x="343" y="320" width="5" height="5" fill="#dad6d0"/><rect x="348" y="320" width="5" height="5" fill="#ebe7e1"/><rect x="353" y="320" width="5" height="5" fill="#d4d0ca"/><rect x="358" y="320" width="5" height="5" fill="#e0dcd6"/><rect x="363" y="320" width="5" height="5" fill="#d2d2d2"/><rect x="368" y="320" width="5" height="5" fill="#d6dae4"/><rect x="373" y="320" width="5" height="5" fill="#e6eaf0"/><rect x="378" y="320" width="5" height="5" fill="#d2cec8"/><rect x="383" y="320" width="5" height="5" fill="#cbcfd9"/><rect x="388" y="320" width="5" height="5" fill="#cecece"/><rect x="393" y="320" width="5" height="5" fill="#d1cdc7"/><rect x="398" y="320" width="5" height="5" fill="#cbcfd9"/><rect x="403" y="320" width="5" height="5" fill="#caced4"/><rect x="408" y="320" width="5" height="5" fill="#cecece"/><rect x="413" y="320" width="5" height="5" fill="#d3d7e1"/><rect x="679" y="309" width="5" height="5" fill="#b5b9bf"/><rect x="684" y="309" width="5" height="5" fill="#acacac"/><rect x="689" y="309" width="5" height="5" fill="#b5b1ab"/><rect x="694" y="309" width="5" height="5" fill="#b1b1b1"/><rect x="699" y="309" width="5" height="5" fill="#d2cec8"/><rect x="704" y="309" width="5" height="5" fill="#c2c2c2"/><rect x="709" y="309" width="5" height="5" fill="#b4b8be"/><rect x="714" y="309" width="5" height="5" fill="#f2eee8"/><rect x="719" y="309" width="5" height="5" fill="#c1c1c1"/><rect x="724" y="309" width="5" height="5" fill="#ababab"/><rect x="729" y="309" width="5" height="5" fill="#b0aca6"/><rect x="734" y="309" width="5" height="5" fill="#e6eaf4"/><rect x="739" y="309" width="5" height="5" fill="#b0aca6"/><rect x="744" y="309" width="5" height="5" fill="#acb0ba"/><rect x="749" y="309" width="5" height="5" fill="#c1bdb7"/><rect x="754" y="309" width="5" height="5" fill="#c0c0c0"/><rect x="759" y="309" width="5" height="5" fill="#a4a8ae"/><rect x="764" y="309" width="5" height="5" fill="#c3c3c3"/><rect x="769" y="309" width="5" height="5" fill="#c0bcb6"/><rect x="774" y="309" width="5" height="5" fill="#c1c1c1"/><rect x="679" y="314" width="5" height="5" fill="#9c9892"/><rect x="684" y="314" width="5" height="5" fill="#abafb9"/><rect x="689" y="314" width="5" height="5" fill="#7f8389"/><rect x="694" y="314" width="5" height="5" fill="#9c9c9c"/><rect x="699" y="314" width="5" height="5" fill="#a4a8b2"/><rect x="704" y="314" width="5" height="5" fill="#7e828c"/><rect x="709" y="314" width="5" height="5" fill="#7e828c"/><rect x="714" y="314" width="5" height="5" fill="#e8e4de"/><rect x="719" y="314" width="5" height="5" fill="#8a8e94"/><rect x="724" y="314" width="5" height="5" fill="#8a8680"/><rect x="729" y="314" width="5" height="5" fill="#9d9993"/><rect x="734" y="314" width="5" height="5" fill="#efebe5"/><rect x="739" y="314" width="5" height="5" fill="#8a8680"/><rect x="744" y="314" width="5" height="5" fill="#adb1b7"/><rect x="749" y="314" width="5" height="5" fill="#b4b0aa"/><rect x="754" y="314" width="5" height="5" fill="#99958f"/><rect x="759" y="314" width="5" height="5" fill="#7e8288"/><rect x="764" y="314" width="5" height="5" fill="#b6b2ac"/><rect x="769" y="314" width="5" height="5" fill="#aaaaaa"/><rect x="774" y="314" width="5" height="5" fill="#838383"/><rect x="679" y="319" width="5" height="5" fill="#c5c9d3"/><rect x="684" y="319" width="5" height="5" fill="#d8dce6"/><rect x="689" y="319" width="5" height="5" fill="#dadee8"/><rect x="694" y="319" width="5" height="5" fill="#e7e3dd"/><rect x="699" y="319" width="5" height="5" fill="#cfd3dd"/><rect x="704" y="319" width="5" height="5" fill="#c6cad4"/><rect x="709" y="319" width="5" height="5" fill="#cdcdcd"/><rect x="714" y="319" width="5" height="5" fill="#e6eaf0"/><rect x="719" y="319" width="5" height="5" fill="#e0e0e0"/><rect x="724" y="319" width="5" height="5" fill="#dbdbdb"/><rect x="729" y="319" width="5" height="5" fill="#d8d4ce"/><rect x="734" y="319" width="5" height="5" fill="#f0ece6"/><rect x="739" y="319" width="5" height="5" fill="#cecac4"/><rect x="744" y="319" width="5" height="5" fill="#c8ccd6"/><rect x="749" y="319" width="5" height="5" fill="#e0e0e0"/><rect x="754" y="319" width="5" height="5" fill="#c9cdd7"/><rect x="759" y="319" width="5" height="5" fill="#c6cad0"/><rect x="764" y="319" width="5" height="5" fill="#c3c7d1"/><rect x="769" y="319" width="5" height="5" fill="#ddd9d3"/><rect x="774" y="319" width="5" height="5" fill="#d2d2d2"/><rect x="127" y="357" width="92" height="3" fill="#eeeeee"/><rect x="335" y="357" width="111" height="3" fill="#eeeeee"/><rect x="676" y="355" width="111" height="4" fill="#e9e9e9"/><rect x="676" y="360" width="111" height="4" fill="#efefef"/><rect x="130" y="337" width="5" height="5" fill="#dedede"/><rect x="135" y="337" width="5" height="5" fill="#cdc9c3"/><rect x="140" y="337" width="5" height="5" fill="#c8c8c8"/><rect x="145" y="337" width="5" height="5" fill="#c3c7d1"/><rect x="150" y="337" width="5" height="5" fill="#dee2e8"/><rect x="155" y="337" width="5" height="5" fill="#dfdfdf"/><rect x="160" y="337" width="5" height="5" fill="#d1d1d1"/><rect x="165" y="337" width="5" height="5" fill="#d7dbe5"/><rect x="170" y="337" width="5" height="5" fill="#ced2d8"/><rect x="130" y="342" width="5" height="5" fill="#a8acb2"/><rect x="135" y="342" width="5" height="5" fill="#97938d"/><rect x="140" y="342" width="5" height="5" fill="#a29e98"/><rect x="145" y="342" width="5" height="5" fill="#b4b0aa"/><rect x="150" y="342" width="5" height="5" fill="#a7a39d"/><rect x="155" y="342" width="5" height="5" fill="#9a9a9a"/><rect x="160" y="342" width="5" height="5" fill="#a6a6a6"/><rect x="165" y="342" width="5" height="5" fill="#959595"/><rect x="170" y="342" width="5" height="5" fill="#999999"/><rect x="130" y="347" width="5" height="5" fill="#c2beb8"/><rect x="135" y="347" width="5" height="5" fill="#bebab4"/><rect x="140" y="347" width="5" height="5" fill="#aaaeb8"/><rect x="145" y="347" width="5" height="5" fill="#bcbcbc"/><rect x="150" y="347" width="5" height="5" fill="#d0ccc6"/><rect x="155" y="347" width="5" height="5" fill="#b6bac0"/><rect x="160" y="347" width="5" height="5" fill="#aeb2b8"/><rect x="165" y="347" width="5" height="5" fill="#c9c9c9"/><rect x="170" y="347" width="5" height="5" fill="#b2b2b2"/><rect x="190" y="337" width="5" height="5" fill="#e1e1e1"/><rect x="195" y="337" width="5" height="5" fill="#e5e1db"/><rect x="200" y="337" width="5" height="5" fill="#cbc7c1"/><rect x="205" y="337" width="5" height="5" fill="#d1d1d1"/><rect x="210" y="337" width="5" height="5" fill="#c6c6c6"/><rect x="190" y="342" width="5" height="5" fill="#b4b0aa"/><rect x="195" y="342" width="5" height="5" fill="#969696"/><rect x="200" y="342" width="5" height="5" fill="#a5a19b"/><rect x="205" y="342" width="5" height="5" fill="#8f939d"/><rect x="210" y="342" width="5" height="5" fill="#b6b2ac"/><rect x="190" y="347" width="5" height="5" fill="#d6d6d6"/><rect x="195" y="347" width="5" height="5" fill="#aeb2b8"/><rect x="200" y="347" width="5" height="5" fill="#ced2d8"/><rect x="205" y="347" width="5" height="5" fill="#d9d5cf"/><rect x="210" y="347" width="5" height="5" fill="#b9b9b9"/><rect x="338" y="340" width="5" height="5" fill="#bbb7b1"/><rect x="343" y="340" width="5" height="5" fill="#a7a7a7"/><rect x="348" y="340" width="5" height="5" fill="#b1ada7"/><rect x="338" y="345" width="5" height="5" fill="#86827c"/><rect x="343" y="345" width="5" height="5" fill="#aaaeb4"/><rect x="348" y="345" width="5" height="5" fill="#8d8d8d"/><rect x="338" y="350" width="5" height="5" fill="#ede9e3"/><rect x="343" y="350" width="5" height="5" fill="#d6dae0"/><rect x="348" y="350" width="5" height="5" fill="#d8d8d8"/><rect x="358" y="340" width="5" height="5" fill="#cbc7c1"/><rect x="363" y="340" width="5" height="5" fill="#a2a2a2"/><rect x="368" y="340" width="5" height="5" fill="#9a9ea8"/><rect x="373" y="340" width="5" height="5" fill="#bbbfc9"/><rect x="378" y="340" width="5" height="5" fill="#9ca0aa"/><rect x="383" y="340" width="5" height="5" fill="#9ea2ac"/><rect x="388" y="340" width="5" height="5" fill="#ccc8c2"/><rect x="393" y="340" width="5" height="5" fill="#a3a7ad"/><rect x="398" y="340" width="5" height="5" fill="#c0c0c0"/><rect x="403" y="340" width="5" height="5" fill="#c7c7c7"/><rect x="408" y="340" width="5" height="5" fill="#b3b7bd"/><rect x="413" y="340" width="5" height="5" fill="#a9adb7"/><rect x="418" y="340" width="5" height="5" fill="#acb0b6"/><rect x="423" y="340" width="5" height="5" fill="#abafb9"/><rect x="428" y="340" width="5" height="5" fill="#a7a39d"/><rect x="433" y="340" width="5" height="5" fill="#c8c4be"/><rect x="358" y="345" width="5" height="5" fill="#9498a2"/><rect x="363" y="345" width="5" height="5" fill="#87837d"/><rect x="368" y="345" width="5" height="5" fill="#a9a9a9"/><rect x="373" y="345" width="5" height="5" fill="#95999f"/><rect x="378" y="345" width="5" height="5" fill="#999999"/><rect x="383" y="345" width="5" height="5" fill="#7a7e88"/><rect x="388" y="345" width="5" height="5" fill="#848892"/><rect x="393" y="345" width="5" height="5" fill="#878787"/><rect x="398" y="345" width="5" height="5" fill="#9d9993"/><rect x="403" y="345" width="5" height="5" fill="#91959f"/><rect x="408" y="345" width="5" height="5" fill="#b1b1b1"/><rect x="413" y="345" width="5" height="5" fill="#888888"/><rect x="418" y="345" width="5" height="5" fill="#87837d"/><rect x="423" y="345" width="5" height="5" fill="#85898f"/><rect x="428" y="345" width="5" height="5" fill="#999999"/><rect x="433" y="345" width="5" height="5" fill="#a8a49e"/><rect x="358" y="350" width="5" height="5" fill="#f0ece6"/><rect x="363" y="350" width="5" height="5" fill="#e8e4de"/><rect x="368" y="350" width="5" height="5" fill="#d2d2d2"/><rect x="373" y="350" width="5" height="5" fill="#dedad4"/><rect x="378" y="350" width="5" height="5" fill="#d6d2cc"/><rect x="383" y="350" width="5" height="5" fill="#d2d2d2"/><rect x="388" y="350" width="5" height="5" fill="#caced8"/><rect x="393" y="350" width="5" height="5" fill="#dcdcdc"/><rect x="398" y="350" width="5" height="5" fill="#d6d6d6"/><rect x="403" y="350" width="5" height="5" fill="#e7e7e7"/><rect x="408" y="350" width="5" height="5" fill="#e4e8f2"/><rect x="413" y="350" width="5" height="5" fill="#d7d7d7"/><rect x="418" y="350" width="5" height="5" fill="#dce0e6"/><rect x="423" y="350" width="5" height="5" fill="#d9d9d9"/><rect x="428" y="350" width="5" height="5" fill="#e5e9ef"/><rect x="433" y="350" width="5" height="5" fill="#dce0e6"/><rect x="679" y="339" width="5" height="5" fill="#abafb5"/><rect x="684" y="339" width="5" height="5" fill="#b7b3ad"/><rect x="689" y="339" width="5" height="5" fill="#c2beb8"/><rect x="694" y="339" width="5" height="5" fill="#abafb9"/><rect x="699" y="339" width="5" height="5" fill="#b4b0aa"/><rect x="704" y="339" width="5" height="5" fill="#b2b2b2"/><rect x="709" y="339" width="5" height="5" fill="#c2beb8"/><rect x="714" y="339" width="5" height="5" fill="#a9adb7"/><rect x="719" y="339" width="5" height="5" fill="#e4e4e4"/><rect x="724" y="339" width="5" height="5" fill="#b0b4ba"/><rect x="729" y="339" width="5" height="5" fill="#b1b1b1"/><rect x="734" y="339" width="5" height="5" fill="#c4c8ce"/><rect x="739" y="339" width="5" height="5" fill="#a3a7ad"/><rect x="744" y="339" width="5" height="5" fill="#b9b9b9"/><rect x="749" y="339" width="5" height="5" fill="#c1bdb7"/><rect x="754" y="339" width="5" height="5" fill="#c6c2bc"/><rect x="759" y="339" width="5" height="5" fill="#d3cfc9"/><rect x="764" y="339" width="5" height="5" fill="#c8ccd6"/><rect x="769" y="339" width="5" height="5" fill="#bcb8b2"/><rect x="679" y="344" width="5" height="5" fill="#8b8f99"/><rect x="684" y="344" width="5" height="5" fill="#969aa0"/><rect x="689" y="344" width="5" height="5" fill="#9397a1"/><rect x="694" y="344" width="5" height="5" fill="#9ca0aa"/><rect x="699" y="344" width="5" height="5" fill="#8d8d8d"/><rect x="704" y="344" width="5" height="5" fill="#86827c"/><rect x="709" y="344" width="5" height="5" fill="#9b9fa9"/><rect x="714" y="344" width="5" height="5" fill="#8b8f99"/><rect x="719" y="344" width="5" height="5" fill="#eef2fc"/><rect x="724" y="344" width="5" height="5" fill="#878b95"/><rect x="729" y="344" width="5" height="5" fill="#9b9b9b"/><rect x="734" y="344" width="5" height="5" fill="#868686"/><rect x="739" y="344" width="5" height="5" fill="#9296a0"/><rect x="744" y="344" width="5" height="5" fill="#999999"/><rect x="749" y="344" width="5" height="5" fill="#a29e98"/><rect x="754" y="344" width="5" height="5" fill="#9ea2a8"/><rect x="759" y="344" width="5" height="5" fill="#848484"/><rect x="764" y="344" width="5" height="5" fill="#aaaaaa"/><rect x="769" y="344" width="5" height="5" fill="#83878d"/><rect x="679" y="349" width="5" height="5" fill="#ced2d8"/><rect x="684" y="349" width="5" height="5" fill="#d8d8d8"/><rect x="689" y="349" width="5" height="5" fill="#cdc9c3"/><rect x="694" y="349" width="5" height="5" fill="#dee2ec"/><rect x="699" y="349" width="5" height="5" fill="#dcdcdc"/><rect x="704" y="349" width="5" height="5" fill="#c8c8c8"/><rect x="709" y="349" width="5" height="5" fill="#d7dbe1"/><rect x="714" y="349" width="5" height="5" fill="#dedede"/><rect x="719" y="349" width="5" height="5" fill="#dfe3ed"/><rect x="724" y="349" width="5" height="5" fill="#d1d1d1"/><rect x="729" y="349" width="5" height="5" fill="#d9dde3"/><rect x="734" y="349" width="5" height="5" fill="#cfcfcf"/><rect x="739" y="349" width="5" height="5" fill="#e8e4de"/><rect x="744" y="349" width="5" height="5" fill="#e1ddd7"/><rect x="749" y="349" width="5" height="5" fill="#d3cfc9"/><rect x="754" y="349" width="5" height="5" fill="#e8e4de"/><rect x="759" y="349" width="5" height="5" fill="#caced8"/><rect x="764" y="349" width="5" height="5" fill="#d2cec8"/><rect x="769" y="349" width="5" height="5" fill="#d2d6e0"/><rect x="127" y="387" width="92" height="3" fill="#f1f1f1"/><rect x="335" y="387" width="111" height="3" fill="#f1f1f1"/><rect x="676" y="389" width="111" height="1" fill="#f4f4f4"/><rect x="130" y="367" width="5" height="5" fill="#d4d0ca"/><rect x="135" y="367" width="5" height="5" fill="#d7d3cd"/><rect x="140" y="367" width="5" height="5" fill="#e3e3e3"/><rect x="145" y="367" width="5" height="5" fill="#ddd9d3"/><rect x="150" y="367" width="5" height="5" fill="#c5c5c5"/><rect x="155" y="367" width="5" height="5" fill="#c8ccd6"/><rect x="160" y="367" width="5" height="5" fill="#c9cdd3"/><rect x="165" y="367" width="5" height="5" fill="#d0d4da"/><rect x="170" y="367" width="5" height="5" fill="#d1d5df"/><rect x="130" y="372" width="5" height="5" fill="#9a9690"/><rect x="135" y="372" width="5" height="5" fill="#95918b"/><rect x="140" y="372" width="5" height="5" fill="#898d93"/><rect x="145" y="372" width="5" height="5" fill="#9b9fa9"/><rect x="150" y="372" width="5" height="5" fill="#b1ada7"/><rect x="155" y="372" width="5" height="5" fill="#abafb5"/><rect x="160" y="372" width="5" height="5" fill="#96928c"/><rect x="165" y="372" width="5" height="5" fill="#a8acb2"/><rect x="170" y="372" width="5" height="5" fill="#9fa3a9"/><rect x="130" y="377" width="5" height="5" fill="#c9c5bf"/><rect x="135" y="377" width="5" height="5" fill="#cac6c0"/><rect x="140" y="377" width="5" height="5" fill="#d0d0d0"/><rect x="145" y="377" width="5" height="5" fill="#c9c5bf"/><rect x="150" y="377" width="5" height="5" fill="#abafb9"/><rect x="155" y="377" width="5" height="5" fill="#bababa"/><rect x="160" y="377" width="5" height="5" fill="#cfd3d9"/><rect x="165" y="377" width="5" height="5" fill="#b5b1ab"/><rect x="170" y="377" width="5" height="5" fill="#d3cfc9"/><rect x="190" y="367" width="5" height="5" fill="#d2d6dc"/><rect x="195" y="367" width="5" height="5" fill="#d3d7dd"/><rect x="200" y="367" width="5" height="5" fill="#bfc3c9"/><rect x="205" y="367" width="5" height="5" fill="#c5c5c5"/><rect x="210" y="367" width="5" height="5" fill="#d2cec8"/><rect x="190" y="372" width="5" height="5" fill="#adb1b7"/><rect x="195" y="372" width="5" height="5" fill="#9fa3ad"/><rect x="200" y="372" width="5" height="5" fill="#b0aca6"/><rect x="205" y="372" width="5" height="5" fill="#8d8d8d"/><rect x="210" y="372" width="5" height="5" fill="#a9a9a9"/><rect x="190" y="377" width="5" height="5" fill="#cfd3d9"/><rect x="195" y="377" width="5" height="5" fill="#aeaeae"/><rect x="200" y="377" width="5" height="5" fill="#afafaf"/><rect x="205" y="377" width="5" height="5" fill="#d6d2cc"/><rect x="210" y="377" width="5" height="5" fill="#bfbfbf"/><rect x="338" y="370" width="5" height="5" fill="#c5c1bb"/><rect x="343" y="370" width="5" height="5" fill="#c0c0c0"/><rect x="348" y="370" width="5" height="5" fill="#bcb8b2"/><rect x="338" y="375" width="5" height="5" fill="#97938d"/><rect x="343" y="375" width="5" height="5" fill="#888888"/><rect x="348" y="375" width="5" height="5" fill="#9b9791"/><rect x="338" y="380" width="5" height="5" fill="#e1e5ef"/><rect x="343" y="380" width="5" height="5" fill="#d2d2d2"/><rect x="348" y="380" width="5" height="5" fill="#cdcdcd"/><rect x="358" y="370" width="5" height="5" fill="#a1a5af"/><rect x="363" y="370" width="5" height="5" fill="#a4a4a4"/><rect x="368" y="370" width="5" height="5" fill="#c6c6c6"/><rect x="373" y="370" width="5" height="5" fill="#cecac4"/><rect x="378" y="370" width="5" height="5" fill="#bdb9b3"/><rect x="383" y="370" width="5" height="5" fill="#9e9e9e"/><rect x="388" y="370" width="5" height="5" fill="#cbc7c1"/><rect x="393" y="370" width="5" height="5" fill="#b8b4ae"/><rect x="398" y="370" width="5" height="5" fill="#cbc7c1"/><rect x="403" y="370" width="5" height="5" fill="#bebab4"/><rect x="408" y="370" width="5" height="5" fill="#bbbfc5"/><rect x="413" y="370" width="5" height="5" fill="#bdbdbd"/><rect x="418" y="370" width="5" height="5" fill="#a8a8a8"/><rect x="423" y="370" width="5" height="5" fill="#a0a0a0"/><rect x="428" y="370" width="5" height="5" fill="#c0c0c0"/><rect x="433" y="370" width="5" height="5" fill="#b7b7b7"/><rect x="358" y="375" width="5" height="5" fill="#8f8f8f"/><rect x="363" y="375" width="5" height="5" fill="#838383"/><rect x="368" y="375" width="5" height="5" fill="#84807a"/><rect x="373" y="375" width="5" height="5" fill="#9fa3a9"/><rect x="378" y="375" width="5" height="5" fill="#8c8c8c"/><rect x="383" y="375" width="5" height="5" fill="#9a9a9a"/><rect x="388" y="375" width="5" height="5" fill="#a5a19b"/><rect x="393" y="375" width="5" height="5" fill="#ada9a3"/><rect x="398" y="375" width="5" height="5" fill="#a5a9af"/><rect x="403" y="375" width="5" height="5" fill="#9e9a94"/><rect x="408" y="375" width="5" height="5" fill="#8f8b85"/><rect x="413" y="375" width="5" height="5" fill="#939393"/><rect x="418" y="375" width="5" height="5" fill="#8f9399"/><rect x="423" y="375" width="5" height="5" fill="#7f8389"/><rect x="428" y="375" width="5" height="5" fill="#acb0ba"/><rect x="433" y="375" width="5" height="5" fill="#b1ada7"/><rect x="358" y="380" width="5" height="5" fill="#c7cbd5"/><rect x="363" y="380" width="5" height="5" fill="#e2e6f0"/><rect x="368" y="380" width="5" height="5" fill="#dee2ec"/><rect x="373" y="380" width="5" height="5" fill="#cbcfd5"/><rect x="378" y="380" width="5" height="5" fill="#dbdfe9"/><rect x="383" y="380" width="5" height="5" fill="#d2d2d2"/><rect x="388" y="380" width="5" height="5" fill="#d6d2cc"/><rect x="393" y="380" width="5" height="5" fill="#d0d4da"/><rect x="398" y="380" width="5" height="5" fill="#cecece"/><rect x="403" y="380" width="5" height="5" fill="#d3d7dd"/><rect x="408" y="380" width="5" height="5" fill="#e6eaf0"/><rect x="413" y="380" width="5" height="5" fill="#f1ede7"/><rect x="418" y="380" width="5" height="5" fill="#e3e3e3"/><rect x="423" y="380" width="5" height="5" fill="#d1d5db"/><rect x="428" y="380" width="5" height="5" fill="#dadee4"/><rect x="433" y="380" width="5" height="5" fill="#d6dae0"/><rect x="679" y="369" width="5" height="5" fill="#ccc8c2"/><rect x="684" y="369" width="5" height="5" fill="#b3b7bd"/><rect x="689" y="369" width="5" height="5" fill="#b2b2b2"/><rect x="694" y="369" width="5" height="5" fill="#c5c5c5"/><rect x="699" y="369" width="5" height="5" fill="#e9e9e9"/><rect x="704" y="369" width="5" height="5" fill="#b1b1b1"/><rect x="709" y="369" width="5" height="5" fill="#b9b9b9"/><rect x="714" y="369" width="5" height="5" fill="#c3bfb9"/><rect x="719" y="369" width="5" height="5" fill="#cbcbcb"/><rect x="724" y="369" width="5" height="5" fill="#b9bdc3"/><rect x="729" y="369" width="5" height="5" fill="#d3cfc9"/><rect x="734" y="369" width="5" height="5" fill="#bdc1cb"/><rect x="739" y="369" width="5" height="5" fill="#c2c6cc"/><rect x="744" y="369" width="5" height="5" fill="#a5a5a5"/><rect x="749" y="369" width="5" height="5" fill="#bcc0c6"/><rect x="754" y="369" width="5" height="5" fill="#b7b3ad"/><rect x="759" y="369" width="5" height="5" fill="#b8b8b8"/><rect x="764" y="369" width="5" height="5" fill="#c2beb8"/><rect x="679" y="374" width="5" height="5" fill="#a7a7a7"/><rect x="684" y="374" width="5" height="5" fill="#a6a6a6"/><rect x="689" y="374" width="5" height="5" fill="#8b8b8b"/><rect x="694" y="374" width="5" height="5" fill="#838383"/><rect x="699" y="374" width="5" height="5" fill="#f4f4f4"/><rect x="704" y="374" width="5" height="5" fill="#989898"/><rect x="709" y="374" width="5" height="5" fill="#aeaeae"/><rect x="714" y="374" width="5" height="5" fill="#838383"/><rect x="719" y="374" width="5" height="5" fill="#868a90"/><rect x="724" y="374" width="5" height="5" fill="#a7abb1"/><rect x="729" y="374" width="5" height="5" fill="#80848a"/><rect x="734" y="374" width="5" height="5" fill="#82868c"/><rect x="739" y="374" width="5" height="5" fill="#848484"/><rect x="744" y="374" width="5" height="5" fill="#ada9a3"/><rect x="749" y="374" width="5" height="5" fill="#928e88"/><rect x="754" y="374" width="5" height="5" fill="#acacac"/><rect x="759" y="374" width="5" height="5" fill="#aeb2b8"/><rect x="764" y="374" width="5" height="5" fill="#9a9a9a"/><rect x="679" y="379" width="5" height="5" fill="#cfcfcf"/><rect x="684" y="379" width="5" height="5" fill="#cecece"/><rect x="689" y="379" width="5" height="5" fill="#c9c9c9"/><rect x="694" y="379" width="5" height="5" fill="#dfe3e9"/><rect x="699" y="379" width="5" height="5" fill="#f1f5fb"/><rect x="704" y="379" width="5" height="5" fill="#cbcfd9"/><rect x="709" y="379" width="5" height="5" fill="#cbcbcb"/><rect x="714" y="379" width="5" height="5" fill="#c7cbd1"/><rect x="719" y="379" width="5" height="5" fill="#d4d0ca"/><rect x="724" y="379" width="5" height="5" fill="#d8d4ce"/><rect x="729" y="379" width="5" height="5" fill="#dbd7d1"/><rect x="734" y="379" width="5" height="5" fill="#cecac4"/><rect x="739" y="379" width="5" height="5" fill="#d6d2cc"/><rect x="744" y="379" width="5" height="5" fill="#c5c9cf"/><rect x="749" y="379" width="5" height="5" fill="#e6e2dc"/><rect x="754" y="379" width="5" height="5" fill="#d6d2cc"/><rect x="759" y="379" width="5" height="5" fill="#d2d6e0"/><rect x="764" y="379" width="5" height="5" fill="#e9e5df"/><rect x="127" y="417" width="92" height="3" fill="#eeeeee"/><rect x="319" y="417" width="101" height="3" fill="#eeeeee"/><rect x="676" y="415" width="111" height="4" fill="#e9e9e9"/><rect x="676" y="420" width="111" height="4" fill="#efefef"/><rect x="130" y="397" width="5" height="5" fill="#bec2cc"/><rect x="135" y="397" width="5" height="5" fill="#bec2cc"/><rect x="140" y="397" width="5" height="5" fill="#e4e4e4"/><rect x="145" y="397" width="5" height="5" fill="#d3d7e1"/><rect x="150" y="397" width="5" height="5" fill="#cac6c0"/><rect x="155" y="397" width="5" height="5" fill="#ccd0d6"/><rect x="160" y="397" width="5" height="5" fill="#ccc8c2"/><rect x="165" y="397" width="5" height="5" fill="#d5d5d5"/><rect x="170" y="397" width="5" height="5" fill="#dedede"/><rect x="130" y="402" width="5" height="5" fill="#ababab"/><rect x="135" y="402" width="5" height="5" fill="#9c9c9c"/><rect x="140" y="402" width="5" height="5" fill="#908c86"/><rect x="145" y="402" width="5" height="5" fill="#a9a9a9"/><rect x="150" y="402" width="5" height="5" fill="#a5a9af"/><rect x="155" y="402" width="5" height="5" fill="#8f939d"/><rect x="160" y="402" width="5" height="5" fill="#b5b1ab"/><rect x="165" y="402" width="5" height="5" fill="#b0aca6"/><rect x="170" y="402" width="5" height="5" fill="#aeaeae"/><rect x="130" y="407" width="5" height="5" fill="#bebebe"/><rect x="135" y="407" width="5" height="5" fill="#b4b8c2"/><rect x="140" y="407" width="5" height="5" fill="#b6b6b6"/><rect x="145" y="407" width="5" height="5" fill="#d4d4d4"/><rect x="150" y="407" width="5" height="5" fill="#c7cbd1"/><rect x="155" y="407" width="5" height="5" fill="#cfcfcf"/><rect x="160" y="407" width="5" height="5" fill="#dad6d0"/><rect x="165" y="407" width="5" height="5" fill="#c2c2c2"/><rect x="170" y="407" width="5" height="5" fill="#bfc3cd"/><rect x="190" y="397" width="5" height="5" fill="#c2c6d0"/><rect x="195" y="397" width="5" height="5" fill="#cac6c0"/><rect x="200" y="397" width="5" height="5" fill="#d6d2cc"/><rect x="205" y="397" width="5" height="5" fill="#cdd1db"/><rect x="210" y="397" width="5" height="5" fill="#e3e3e3"/><rect x="190" y="402" width="5" height="5" fill="#9ea2a8"/><rect x="195" y="402" width="5" height="5" fill="#9296a0"/><rect x="200" y="402" width="5" height="5" fill="#96928c"/><rect x="205" y="402" width="5" height="5" fill="#acb0b6"/><rect x="210" y="402" width="5" height="5" fill="#acb0b6"/><rect x="190" y="407" width="5" height="5" fill="#b4b0aa"/><rect x="195" y="407" width="5" height="5" fill="#d7d3cd"/><rect x="200" y="407" width="5" height="5" fill="#cdcdcd"/><rect x="205" y="407" width="5" height="5" fill="#c4c8ce"/><rect x="210" y="407" width="5" height="5" fill="#cbcfd5"/><rect x="322" y="400" width="5" height="5" fill="#b2b2b2"/><rect x="327" y="400" width="5" height="5" fill="#b5b9c3"/><rect x="322" y="405" width="5" height="5" fill="#b2aea8"/><rect x="327" y="405" width="5" height="5" fill="#a5a5a5"/><rect x="322" y="410" width="5" height="5" fill="#d7d3cd"/><rect x="327" y="410" width="5" height="5" fill="#d7dbe1"/><rect x="337" y="400" width="5" height="5" fill="#b1ada7"/><rect x="342" y="400" width="5" height="5" fill="#b0aca6"/><rect x="347" y="400" width="5" height="5" fill="#adb1b7"/><rect x="352" y="400" width="5" height="5" fill="#c5c5c5"/><rect x="357" y="400" width="5" height="5" fill="#a7a7a7"/><rect x="362" y="400" width="5" height="5" fill="#b6b2ac"/><rect x="367" y="400" width="5" height="5" fill="#c5c1bb"/><rect x="372" y="400" width="5" height="5" fill="#a8a8a8"/><rect x="377" y="400" width="5" height="5" fill="#b2b2b2"/><rect x="382" y="400" width="5" height="5" fill="#aaaeb4"/><rect x="387" y="400" width="5" height="5" fill="#a4a4a4"/><rect x="392" y="400" width="5" height="5" fill="#c8c8c8"/><rect x="397" y="400" width="5" height="5" fill="#a4a8b2"/><rect x="402" y="400" width="5" height="5" fill="#a7a7a7"/><rect x="407" y="400" width="5" height="5" fill="#adb1b7"/><rect x="412" y="400" width="5" height="5" fill="#abafb9"/><rect x="337" y="405" width="5" height="5" fill="#919191"/><rect x="342" y="405" width="5" height="5" fill="#82868c"/><rect x="347" y="405" width="5" height="5" fill="#8c8882"/><rect x="352" y="405" width="5" height="5" fill="#878b95"/><rect x="357" y="405" width="5" height="5" fill="#9d9d9d"/><rect x="362" y="405" width="5" height="5" fill="#7a7e88"/><rect x="367" y="405" width="5" height="5" fill="#acb0ba"/><rect x="372" y="405" width="5" height="5" fill="#acacac"/><rect x="377" y="405" width="5" height="5" fill="#9ca0a6"/><rect x="382" y="405" width="5" height="5" fill="#8c909a"/><rect x="387" y="405" width="5" height="5" fill="#818181"/><rect x="392" y="405" width="5" height="5" fill="#94908a"/><rect x="397" y="405" width="5" height="5" fill="#a9adb7"/><rect x="402" y="405" width="5" height="5" fill="#7c8086"/><rect x="407" y="405" width="5" height="5" fill="#898d97"/><rect x="412" y="405" width="5" height="5" fill="#b0aca6"/><rect x="337" y="410" width="5" height="5" fill="#dbdfe5"/><rect x="342" y="410" width="5" height="5" fill="#dbdfe9"/><rect x="347" y="410" width="5" height="5" fill="#e8e8e8"/><rect x="352" y="410" width="5" height="5" fill="#dee2e8"/><rect x="357" y="410" width="5" height="5" fill="#dde1e7"/><rect x="362" y="410" width="5" height="5" fill="#e7e3dd"/><rect x="367" y="410" width="5" height="5" fill="#e8e8e8"/><rect x="372" y="410" width="5" height="5" fill="#e2e2e2"/><rect x="377" y="410" width="5" height="5" fill="#e1e1e1"/><rect x="382" y="410" width="5" height="5" fill="#d5d9e3"/><rect x="387" y="410" width="5" height="5" fill="#ddd9d3"/><rect x="392" y="410" width="5" height="5" fill="#dde1e7"/><rect x="397" y="410" width="5" height="5" fill="#caced8"/><rect x="402" y="410" width="5" height="5" fill="#ced2dc"/><rect x="407" y="410" width="5" height="5" fill="#dfe3e9"/><rect x="412" y="410" width="5" height="5" fill="#e1e1e1"/><rect x="679" y="399" width="5" height="5" fill="#afb3bd"/><rect x="684" y="399" width="5" height="5" fill="#bdc1cb"/><rect x="689" y="399" width="5" height="5" fill="#aaa6a0"/><rect x="694" y="399" width="5" height="5" fill="#c3bfb9"/><rect x="699" y="399" width="5" height="5" fill="#ccd0d6"/><rect x="704" y="399" width="5" height="5" fill="#acb0b6"/><rect x="709" y="399" width="5" height="5" fill="#b9b9b9"/><rect x="714" y="399" width="5" height="5" fill="#b7bbc5"/><rect x="719" y="399" width="5" height="5" fill="#e8e4de"/><rect x="724" y="399" width="5" height="5" fill="#c7c7c7"/><rect x="729" y="399" width="5" height="5" fill="#abafb5"/><rect x="734" y="399" width="5" height="5" fill="#b5b1ab"/><rect x="739" y="399" width="5" height="5" fill="#bbbbbb"/><rect x="744" y="399" width="5" height="5" fill="#c3c7d1"/><rect x="749" y="399" width="5" height="5" fill="#c7c7c7"/><rect x="754" y="399" width="5" height="5" fill="#c7c3bd"/><rect x="759" y="399" width="5" height="5" fill="#a2a6ac"/><rect x="764" y="399" width="5" height="5" fill="#c0bcb6"/><rect x="769" y="399" width="5" height="5" fill="#b4b8c2"/><rect x="679" y="404" width="5" height="5" fill="#abafb9"/><rect x="684" y="404" width="5" height="5" fill="#8b8f95"/><rect x="689" y="404" width="5" height="5" fill="#878b95"/><rect x="694" y="404" width="5" height="5" fill="#a2a2a2"/><rect x="699" y="404" width="5" height="5" fill="#b4b0aa"/><rect x="704" y="404" width="5" height="5" fill="#94989e"/><rect x="709" y="404" width="5" height="5" fill="#8b8781"/><rect x="714" y="404" width="5" height="5" fill="#8d919b"/><rect x="719" y="404" width="5" height="5" fill="#e2e2e2"/><rect x="724" y="404" width="5" height="5" fill="#80848e"/><rect x="729" y="404" width="5" height="5" fill="#989ca2"/><rect x="734" y="404" width="5" height="5" fill="#aaaeb4"/><rect x="739" y="404" width="5" height="5" fill="#9c9892"/><rect x="744" y="404" width="5" height="5" fill="#929292"/><rect x="749" y="404" width="5" height="5" fill="#96928c"/><rect x="754" y="404" width="5" height="5" fill="#abafb9"/><rect x="759" y="404" width="5" height="5" fill="#a3a3a3"/><rect x="764" y="404" width="5" height="5" fill="#9599a3"/><rect x="769" y="404" width="5" height="5" fill="#8f8f8f"/><rect x="679" y="409" width="5" height="5" fill="#cccccc"/><rect x="684" y="409" width="5" height="5" fill="#dde1e7"/><rect x="689" y="409" width="5" height="5" fill="#c8ccd6"/><rect x="694" y="409" width="5" height="5" fill="#e0dcd6"/><rect x="699" y="409" width="5" height="5" fill="#dfdfdf"/><rect x="704" y="409" width="5" height="5" fill="#e2e2e2"/><rect x="709" y="409" width="5" height="5" fill="#cfd3d9"/><rect x="714" y="409" width="5" height="5" fill="#d6dae4"/><rect x="719" y="409" width="5" height="5" fill="#eeeae4"/><rect x="724" y="409" width="5" height="5" fill="#dcdcdc"/><rect x="729" y="409" width="5" height="5" fill="#dadee8"/><rect x="734" y="409" width="5" height="5" fill="#d3d3d3"/><rect x="739" y="409" width="5" height="5" fill="#ccd0d6"/><rect x="744" y="409" width="5" height="5" fill="#d0d4da"/><rect x="749" y="409" width="5" height="5" fill="#caced8"/><rect x="754" y="409" width="5" height="5" fill="#dddddd"/><rect x="759" y="409" width="5" height="5" fill="#d7d7d7"/><rect x="764" y="409" width="5" height="5" fill="#dde1e7"/><rect x="769" y="409" width="5" height="5" fill="#e7e3dd"/><rect x="127" y="447" width="92" height="3" fill="#f1f1f1"/><rect x="319" y="447" width="101" height="3" fill="#f1f1f1"/><rect x="676" y="449" width="111" height="1" fill="#f4f4f4"/><rect x="130" y="427" width="5" height="5" fill="#d9d9d9"/><rect x="135" y="427" width="5" height="5" fill="#dcd8d2"/><rect x="140" y="427" width="5" height="5" fill="#dbdfe9"/><rect x="145" y="427" width="5" height="5" fill="#e2ded8"/><rect x="150" y="427" width="5" height="5" fill="#c4c8ce"/><rect x="155" y="427" width="5" height="5" fill="#dadada"/><rect x="160" y="427" width="5" height="5" fill="#d0d4de"/><rect x="165" y="427" width="5" height="5" fill="#c6c6c6"/><rect x="170" y="427" width="5" height="5" fill="#d7d7d7"/><rect x="130" y="432" width="5" height="5" fill="#b1ada7"/><rect x="135" y="432" width="5" height="5" fill="#b6b2ac"/><rect x="140" y="432" width="5" height="5" fill="#868a90"/><rect x="145" y="432" width="5" height="5" fill="#8a8a8a"/><rect x="150" y="432" width="5" height="5" fill="#8a8e94"/><rect x="155" y="432" width="5" height="5" fill="#a29e98"/><rect x="160" y="432" width="5" height="5" fill="#b0b0b0"/><rect x="165" y="432" width="5" height="5" fill="#afafaf"/><rect x="170" y="432" width="5" height="5" fill="#989898"/><rect x="130" y="437" width="5" height="5" fill="#cecac4"/><rect x="135" y="437" width="5" height="5" fill="#b5b5b5"/><rect x="140" y="437" width="5" height="5" fill="#c9c5bf"/><rect x="145" y="437" width="5" height="5" fill="#bab6b0"/><rect x="150" y="437" width="5" height="5" fill="#d2d2d2"/><rect x="155" y="437" width="5" height="5" fill="#dad6d0"/><rect x="160" y="437" width="5" height="5" fill="#dad6d0"/><rect x="165" y="437" width="5" height="5" fill="#b2b6c0"/><rect x="170" y="437" width="5" height="5" fill="#bdb9b3"/><rect x="190" y="427" width="5" height="5" fill="#c4c8ce"/><rect x="195" y="427" width="5" height="5" fill="#dbdfe5"/><rect x="200" y="427" width="5" height="5" fill="#cecac4"/><rect x="205" y="427" width="5" height="5" fill="#d0ccc6"/><rect x="210" y="427" width="5" height="5" fill="#dddddd"/><rect x="190" y="432" width="5" height="5" fill="#8c909a"/><rect x="195" y="432" width="5" height="5" fill="#ada9a3"/><rect x="200" y="432" width="5" height="5" fill="#878b95"/><rect x="205" y="432" width="5" height="5" fill="#a7a7a7"/><rect x="210" y="432" width="5" height="5" fill="#b0b4be"/><rect x="190" y="437" width="5" height="5" fill="#b5b9c3"/><rect x="195" y="437" width="5" height="5" fill="#bab6b0"/><rect x="200" y="437" width="5" height="5" fill="#ced2d8"/><rect x="205" y="437" width="5" height="5" fill="#acacac"/><rect x="210" y="437" width="5" height="5" fill="#babec8"/><rect x="322" y="430" width="5" height="5" fill="#bcc0ca"/><rect x="327" y="430" width="5" height="5" fill="#cecac4"/><rect x="322" y="435" width="5" height="5" fill="#a39f99"/><rect x="327" y="435" width="5" height="5" fill="#9599a3"/><rect x="322" y="440" width="5" height="5" fill="#e7ebf1"/><rect x="327" y="440" width="5" height="5" fill="#cfcfcf"/><rect x="337" y="430" width="5" height="5" fill="#ccc8c2"/><rect x="342" y="430" width="5" height="5" fill="#c2c6cc"/><rect x="347" y="430" width="5" height="5" fill="#9f9f9f"/><rect x="352" y="430" width="5" height="5" fill="#c5c5c5"/><rect x="357" y="430" width="5" height="5" fill="#b3b3b3"/><rect x="362" y="430" width="5" height="5" fill="#b8bcc6"/><rect x="367" y="430" width="5" height="5" fill="#bdbdbd"/><rect x="372" y="430" width="5" height="5" fill="#a0a0a0"/><rect x="377" y="430" width="5" height="5" fill="#b4b8be"/><rect x="382" y="430" width="5" height="5" fill="#aca8a2"/><rect x="387" y="430" width="5" height="5" fill="#a0a4aa"/><rect x="392" y="430" width="5" height="5" fill="#bbb7b1"/><rect x="397" y="430" width="5" height="5" fill="#c0bcb6"/><rect x="402" y="430" width="5" height="5" fill="#c1c1c1"/><rect x="407" y="430" width="5" height="5" fill="#aaaeb8"/><rect x="412" y="430" width="5" height="5" fill="#adb1bb"/><rect x="337" y="435" width="5" height="5" fill="#94908a"/><rect x="342" y="435" width="5" height="5" fill="#89857f"/><rect x="347" y="435" width="5" height="5" fill="#98948e"/><rect x="352" y="435" width="5" height="5" fill="#999da7"/><rect x="357" y="435" width="5" height="5" fill="#99958f"/><rect x="362" y="435" width="5" height="5" fill="#95918b"/><rect x="367" y="435" width="5" height="5" fill="#969696"/><rect x="372" y="435" width="5" height="5" fill="#a3a7b1"/><rect x="377" y="435" width="5" height="5" fill="#b2b2b2"/><rect x="382" y="435" width="5" height="5" fill="#959595"/><rect x="387" y="435" width="5" height="5" fill="#90949a"/><rect x="392" y="435" width="5" height="5" fill="#939393"/><rect x="397" y="435" width="5" height="5" fill="#a1a5ab"/><rect x="402" y="435" width="5" height="5" fill="#858585"/><rect x="407" y="435" width="5" height="5" fill="#95999f"/><rect x="412" y="435" width="5" height="5" fill="#9da1ab"/><rect x="337" y="440" width="5" height="5" fill="#e2ded8"/><rect x="342" y="440" width="5" height="5" fill="#c8ccd6"/><rect x="347" y="440" width="5" height="5" fill="#d6d6d6"/><rect x="352" y="440" width="5" height="5" fill="#cdcdcd"/><rect x="357" y="440" width="5" height="5" fill="#cdd1db"/><rect x="362" y="440" width="5" height="5" fill="#dce0e6"/><rect x="367" y="440" width="5" height="5" fill="#d2cec8"/><rect x="372" y="440" width="5" height="5" fill="#eeeae4"/><rect x="377" y="440" width="5" height="5" fill="#dadee8"/><rect x="382" y="440" width="5" height="5" fill="#e0e0e0"/><rect x="387" y="440" width="5" height="5" fill="#dde1e7"/><rect x="392" y="440" width="5" height="5" fill="#dfe3e9"/><rect x="397" y="440" width="5" height="5" fill="#dce0e6"/><rect x="402" y="440" width="5" height="5" fill="#cfcfcf"/><rect x="407" y="440" width="5" height="5" fill="#caced4"/><rect x="412" y="440" width="5" height="5" fill="#dbdfe9"/><rect x="679" y="429" width="5" height="5" fill="#cdcdcd"/><rect x="684" y="429" width="5" height="5" fill="#a7abb1"/><rect x="689" y="429" width="5" height="5" fill="#b0b0b0"/><rect x="694" y="429" width="5" height="5" fill="#bfbfbf"/><rect x="699" y="429" width="5" height="5" fill="#cecece"/><rect x="704" y="429" width="5" height="5" fill="#bcbcbc"/><rect x="709" y="429" width="5" height="5" fill="#bcb8b2"/><rect x="714" y="429" width="5" height="5" fill="#eaeaea"/><rect x="719" y="429" width="5" height="5" fill="#bfbfbf"/><rect x="724" y="429" width="5" height="5" fill="#b9b9b9"/><rect x="729" y="429" width="5" height="5" fill="#c4c0ba"/><rect x="734" y="429" width="5" height="5" fill="#d2cec8"/><rect x="739" y="429" width="5" height="5" fill="#a2a6b0"/><rect x="744" y="429" width="5" height="5" fill="#cdc9c3"/><rect x="749" y="429" width="5" height="5" fill="#a7a7a7"/><rect x="754" y="429" width="5" height="5" fill="#c3bfb9"/><rect x="759" y="429" width="5" height="5" fill="#b8bcc6"/><rect x="764" y="429" width="5" height="5" fill="#a9a9a9"/><rect x="769" y="429" width="5" height="5" fill="#caced8"/><rect x="774" y="429" width="5" height="5" fill="#eff3f9"/><rect x="679" y="434" width="5" height="5" fill="#858993"/><rect x="684" y="434" width="5" height="5" fill="#a09c96"/><rect x="689" y="434" width="5" height="5" fill="#888888"/><rect x="694" y="434" width="5" height="5" fill="#a5a9b3"/><rect x="699" y="434" width="5" height="5" fill="#8f8f8f"/><rect x="704" y="434" width="5" height="5" fill="#aaaaaa"/><rect x="709" y="434" width="5" height="5" fill="#9d9d9d"/><rect x="714" y="434" width="5" height="5" fill="#e4e4e4"/><rect x="719" y="434" width="5" height="5" fill="#8f8f8f"/><rect x="724" y="434" width="5" height="5" fill="#848892"/><rect x="729" y="434" width="5" height="5" fill="#89857f"/><rect x="734" y="434" width="5" height="5" fill="#b4b0aa"/><rect x="739" y="434" width="5" height="5" fill="#8b8f99"/><rect x="744" y="434" width="5" height="5" fill="#acb0b6"/><rect x="749" y="434" width="5" height="5" fill="#8d8d8d"/><rect x="754" y="434" width="5" height="5" fill="#95999f"/><rect x="759" y="434" width="5" height="5" fill="#abafb5"/><rect x="764" y="434" width="5" height="5" fill="#878b91"/><rect x="769" y="434" width="5" height="5" fill="#b2b2b2"/><rect x="774" y="434" width="5" height="5" fill="#f9f5ef"/><rect x="679" y="439" width="5" height="5" fill="#d8dce6"/><rect x="684" y="439" width="5" height="5" fill="#d2d6dc"/><rect x="689" y="439" width="5" height="5" fill="#eae6e0"/><rect x="694" y="439" width="5" height="5" fill="#c5c9cf"/><rect x="699" y="439" width="5" height="5" fill="#c9c9c9"/><rect x="704" y="439" width="5" height="5" fill="#c9c9c9"/><rect x="709" y="439" width="5" height="5" fill="#e0e4ea"/><rect x="714" y="439" width="5" height="5" fill="#f4f4f4"/><rect x="719" y="439" width="5" height="5" fill="#dad6d0"/><rect x="724" y="439" width="5" height="5" fill="#cdd1d7"/><rect x="729" y="439" width="5" height="5" fill="#dbdbdb"/><rect x="734" y="439" width="5" height="5" fill="#dde1eb"/><rect x="739" y="439" width="5" height="5" fill="#dbdbdb"/><rect x="744" y="439" width="5" height="5" fill="#d8d4ce"/><rect x="749" y="439" width="5" height="5" fill="#d6dae0"/><rect x="754" y="439" width="5" height="5" fill="#d0d4de"/><rect x="759" y="439" width="5" height="5" fill="#dddddd"/><rect x="764" y="439" width="5" height="5" fill="#cccccc"/><rect x="769" y="439" width="5" height="5" fill="#cfd3d9"/><rect x="774" y="439" width="5" height="5" fill="#eff3fd"/><rect x="127" y="477" width="92" height="3" fill="#eeeeee"/><rect x="319" y="477" width="101" height="3" fill="#eeeeee"/><rect x="676" y="475" width="111" height="4" fill="#e9e9e9"/><rect x="130" y="457" width="5" height="5" fill="#dbdfe9"/><rect x="135" y="457" width="5" height="5" fill="#e5e1db"/><rect x="140" y="457" width="5" height="5" fill="#dedad4"/><rect x="145" y="457" width="5" height="5" fill="#d4d4d4"/><rect x="150" y="457" width="5" height="5" fill="#dcd8d2"/><rect x="155" y="457" width="5" height="5" fill="#c3c3c3"/><rect x="160" y="457" width="5" height="5" fill="#dad6d0"/><rect x="165" y="457" width="5" height="5" fill="#dedede"/><rect x="170" y="457" width="5" height="5" fill="#d5d9e3"/><rect x="130" y="462" width="5" height="5" fill="#afb3bd"/><rect x="135" y="462" width="5" height="5" fill="#b0b0b0"/><rect x="140" y="462" width="5" height="5" fill="#aca8a2"/><rect x="145" y="462" width="5" height="5" fill="#b6b6b6"/><rect x="150" y="462" width="5" height="5" fill="#a4a09a"/><rect x="155" y="462" width="5" height="5" fill="#9599a3"/><rect x="160" y="462" width="5" height="5" fill="#98948e"/><rect x="165" y="462" width="5" height="5" fill="#928e88"/><rect x="170" y="462" width="5" height="5" fill="#97938d"/><rect x="130" y="467" width="5" height="5" fill="#bbb7b1"/><rect x="135" y="467" width="5" height="5" fill="#cbcfd5"/><rect x="140" y="467" width="5" height="5" fill="#d1cdc7"/><rect x="145" y="467" width="5" height="5" fill="#cecece"/><rect x="150" y="467" width="5" height="5" fill="#d2cec8"/><rect x="155" y="467" width="5" height="5" fill="#c5c9d3"/><rect x="160" y="467" width="5" height="5" fill="#b4b8be"/><rect x="165" y="467" width="5" height="5" fill="#c0bcb6"/><rect x="170" y="467" width="5" height="5" fill="#d2d2d2"/><rect x="190" y="457" width="5" height="5" fill="#d6dae4"/><rect x="195" y="457" width="5" height="5" fill="#d6d2cc"/><rect x="200" y="457" width="5" height="5" fill="#bdc1cb"/><rect x="205" y="457" width="5" height="5" fill="#e4e0da"/><rect x="210" y="457" width="5" height="5" fill="#ccc8c2"/><rect x="190" y="462" width="5" height="5" fill="#a0a0a0"/><rect x="195" y="462" width="5" height="5" fill="#9296a0"/><rect x="200" y="462" width="5" height="5" fill="#b3afa9"/><rect x="205" y="462" width="5" height="5" fill="#9e9a94"/><rect x="210" y="462" width="5" height="5" fill="#989ca6"/><rect x="190" y="467" width="5" height="5" fill="#d0ccc6"/><rect x="195" y="467" width="5" height="5" fill="#b8b8b8"/><rect x="200" y="467" width="5" height="5" fill="#b9b9b9"/><rect x="205" y="467" width="5" height="5" fill="#b1b1b1"/><rect x="210" y="467" width="5" height="5" fill="#c4c0ba"/><rect x="322" y="460" width="5" height="5" fill="#c6c2bc"/><rect x="327" y="460" width="5" height="5" fill="#aeb2bc"/><rect x="322" y="465" width="5" height="5" fill="#b5b1ab"/><rect x="327" y="465" width="5" height="5" fill="#898989"/><rect x="322" y="470" width="5" height="5" fill="#c8ccd6"/><rect x="327" y="470" width="5" height="5" fill="#d8d8d8"/><rect x="337" y="460" width="5" height="5" fill="#b1b5bb"/><rect x="342" y="460" width="5" height="5" fill="#bbbbbb"/><rect x="347" y="460" width="5" height="5" fill="#ada9a3"/><rect x="352" y="460" width="5" height="5" fill="#c4c4c4"/><rect x="357" y="460" width="5" height="5" fill="#bab6b0"/><rect x="362" y="460" width="5" height="5" fill="#c3bfb9"/><rect x="367" y="460" width="5" height="5" fill="#9f9f9f"/><rect x="372" y="460" width="5" height="5" fill="#a0a0a0"/><rect x="377" y="460" width="5" height="5" fill="#bcc0ca"/><rect x="382" y="460" width="5" height="5" fill="#c7c3bd"/><rect x="387" y="460" width="5" height="5" fill="#b1ada7"/><rect x="392" y="460" width="5" height="5" fill="#a9adb7"/><rect x="397" y="460" width="5" height="5" fill="#9ea2ac"/><rect x="402" y="460" width="5" height="5" fill="#c7c3bd"/><rect x="407" y="460" width="5" height="5" fill="#aca8a2"/><rect x="412" y="460" width="5" height="5" fill="#a6a29c"/><rect x="337" y="465" width="5" height="5" fill="#8c8c8c"/><rect x="342" y="465" width="5" height="5" fill="#989898"/><rect x="347" y="465" width="5" height="5" fill="#818181"/><rect x="352" y="465" width="5" height="5" fill="#86827c"/><rect x="357" y="465" width="5" height="5" fill="#93979d"/><rect x="362" y="465" width="5" height="5" fill="#979ba5"/><rect x="367" y="465" width="5" height="5" fill="#88847e"/><rect x="372" y="465" width="5" height="5" fill="#a2a6b0"/><rect x="377" y="465" width="5" height="5" fill="#83878d"/><rect x="382" y="465" width="5" height="5" fill="#8b8781"/><rect x="387" y="465" width="5" height="5" fill="#98948e"/><rect x="392" y="465" width="5" height="5" fill="#8a8e94"/><rect x="397" y="465" width="5" height="5" fill="#81858b"/><rect x="402" y="465" width="5" height="5" fill="#9a9ea8"/><rect x="407" y="465" width="5" height="5" fill="#858993"/><rect x="412" y="465" width="5" height="5" fill="#908c86"/><rect x="337" y="470" width="5" height="5" fill="#ebebeb"/><rect x="342" y="470" width="5" height="5" fill="#e4e4e4"/><rect x="347" y="470" width="5" height="5" fill="#d2d2d2"/><rect x="352" y="470" width="5" height="5" fill="#f1ede7"/><rect x="357" y="470" width="5" height="5" fill="#f1ede7"/><rect x="362" y="470" width="5" height="5" fill="#d2cec8"/><rect x="367" y="470" width="5" height="5" fill="#e9e9e9"/><rect x="372" y="470" width="5" height="5" fill="#e7e7e7"/><rect x="377" y="470" width="5" height="5" fill="#d9d5cf"/><rect x="382" y="470" width="5" height="5" fill="#dfe3e9"/><rect x="387" y="470" width="5" height="5" fill="#dbdfe9"/><rect x="392" y="470" width="5" height="5" fill="#cecece"/><rect x="397" y="470" width="5" height="5" fill="#d7d3cd"/><rect x="402" y="470" width="5" height="5" fill="#e5e5e5"/><rect x="407" y="470" width="5" height="5" fill="#ebebeb"/><rect x="412" y="470" width="5" height="5" fill="#dee2e8"/><rect x="679" y="459" width="5" height="5" fill="#bcb8b2"/><rect x="684" y="459" width="5" height="5" fill="#c4c8d2"/><rect x="689" y="459" width="5" height="5" fill="#cecece"/><rect x="694" y="459" width="5" height="5" fill="#c9c5bf"/><rect x="699" y="459" width="5" height="5" fill="#e3e7f1"/><rect x="704" y="459" width="5" height="5" fill="#b2aea8"/><rect x="709" y="459" width="5" height="5" fill="#bdc1cb"/><rect x="714" y="459" width="5" height="5" fill="#a9adb7"/><rect x="719" y="459" width="5" height="5" fill="#b4b4b4"/><rect x="724" y="459" width="5" height="5" fill="#d0d0d0"/><rect x="729" y="459" width="5" height="5" fill="#bec2c8"/><rect x="734" y="459" width="5" height="5" fill="#b1b1b1"/><rect x="739" y="459" width="5" height="5" fill="#afafaf"/><rect x="744" y="459" width="5" height="5" fill="#ada9a3"/><rect x="749" y="459" width="5" height="5" fill="#b8bcc2"/><rect x="754" y="459" width="5" height="5" fill="#a7abb5"/><rect x="759" y="459" width="5" height="5" fill="#a5a9b3"/><rect x="764" y="459" width="5" height="5" fill="#a2a6ac"/><rect x="679" y="464" width="5" height="5" fill="#80848e"/><rect x="684" y="464" width="5" height="5" fill="#9d9993"/><rect x="689" y="464" width="5" height="5" fill="#8a8e98"/><rect x="694" y="464" width="5" height="5" fill="#85898f"/><rect x="699" y="464" width="5" height="5" fill="#ebe7e1"/><rect x="704" y="464" width="5" height="5" fill="#8c9096"/><rect x="709" y="464" width="5" height="5" fill="#858585"/><rect x="714" y="464" width="5" height="5" fill="#a9adb7"/><rect x="719" y="464" width="5" height="5" fill="#a5a5a5"/><rect x="724" y="464" width="5" height="5" fill="#9e9e9e"/><rect x="729" y="464" width="5" height="5" fill="#8d919b"/><rect x="734" y="464" width="5" height="5" fill="#9c9c9c"/><rect x="739" y="464" width="5" height="5" fill="#8b8b8b"/><rect x="744" y="464" width="5" height="5" fill="#97938d"/><rect x="749" y="464" width="5" height="5" fill="#9a9690"/><rect x="754" y="464" width="5" height="5" fill="#928e88"/><rect x="759" y="464" width="5" height="5" fill="#a1a1a1"/><rect x="764" y="464" width="5" height="5" fill="#90949e"/><rect x="679" y="469" width="5" height="5" fill="#dee2ec"/><rect x="684" y="469" width="5" height="5" fill="#cbcbcb"/><rect x="689" y="469" width="5" height="5" fill="#d8d8d8"/><rect x="694" y="469" width="5" height="5" fill="#d8dce2"/><rect x="699" y="469" width="5" height="5" fill="#ecf0fa"/><rect x="704" y="469" width="5" height="5" fill="#e8e4de"/><rect x="709" y="469" width="5" height="5" fill="#d1cdc7"/><rect x="714" y="469" width="5" height="5" fill="#e0e0e0"/><rect x="719" y="469" width="5" height="5" fill="#cdd1db"/><rect x="724" y="469" width="5" height="5" fill="#d0d0d0"/><rect x="729" y="469" width="5" height="5" fill="#cfcfcf"/><rect x="734" y="469" width="5" height="5" fill="#dad6d0"/><rect x="739" y="469" width="5" height="5" fill="#d5d5d5"/><rect x="744" y="469" width="5" height="5" fill="#c5c9cf"/><rect x="749" y="469" width="5" height="5" fill="#d1d1d1"/><rect x="754" y="469" width="5" height="5" fill="#dcdcdc"/><rect x="759" y="469" width="5" height="5" fill="#dad6d0"/><rect x="764" y="469" width="5" height="5" fill="#d6d2cc"/></svg>
<div class="t cell nm" style="left:281px;top:210px;">JESSI</div><div class="t cell r" style="right:157px;top:210px">417</div><div class="t cell r" style="right:45px;top:210px">2.00</div><div class="t cell nm" style="left:281px;top:240px;">JESSI</div><div class="t cell r" style="right:157px;top:240px">33,541</div><div class="t cell r" style="right:45px;top:240px">2.31</div><div class="t cell nm" style="left:281px;top:270px;">JESSI</div><div class="t cell r" style="right:157px;top:270px">1,249</div><div class="t cell r" style="right:45px;top:270px">1.00</div><div class="t cell nm" style="left:281px;top:300px;">JESSI</div><div class="t cell r" style="right:157px;top:300px">1,841</div><div class="t cell r" style="right:45px;top:300px">20.00</div><div class="t cell nm" style="left:281px;top:330px;letter-spacing:-0.95px">GARRET</div><div class="t cell r" style="right:157px;top:330px">5</div><div class="t cell r" style="right:45px;top:330px">2.00</div><div class="t cell nm" style="left:281px;top:360px;letter-spacing:-0.95px">GARRET</div><div class="t cell r" style="right:157px;top:360px">1,707</div><div class="t cell r" style="right:45px;top:360px">99.00</div><div class="t cell nm" style="left:281px;top:390px;">CODY</div><div class="t cell r" style="right:157px;top:390px">5</div><div class="t cell r" style="right:45px;top:390px">2.00</div><div class="t cell nm" style="left:281px;top:420px;">CODY</div><div class="t cell r" style="right:157px;top:420px">217</div><div class="t cell r" style="right:45px;top:420px">2.31</div><div class="t cell nm" style="left:281px;top:450px;">CODY</div><div class="t cell r" style="right:45px;top:450px">99.00</div>
<div class="t lbl" style="left:675px;top:710px">Total balances</div>
<div class="t val" style="right:159px;top:711px;font-size:12px">38,986</div>
<div class="t val" style="right:44px;top:711px;font-size:12px">2.05</div>
<div class="btn" style="left:1037px"><svg width="32" height="32" viewBox="0 0 32 32"><path d="M16 23 V10 M10.5 15.5 L16 10 L21.5 15.5" stroke="#fff" stroke-width="2" fill="none"/></svg></div>
<div class="btn" style="left:1073px"><svg width="32" height="32" viewBox="0 0 32 32"><path d="M16 9 V22 M10.5 16.5 L16 22 L21.5 16.5" stroke="#fff" stroke-width="2" fill="none"/></svg></div>
</body></html>
